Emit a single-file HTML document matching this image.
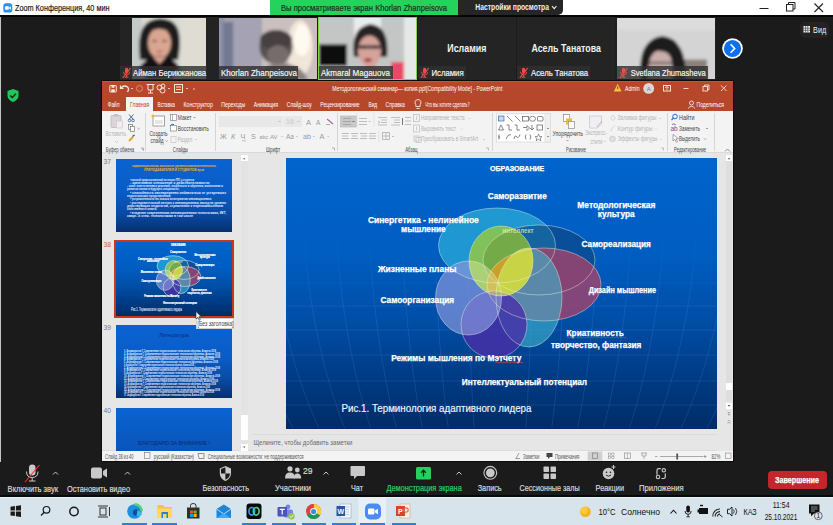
<!DOCTYPE html>
<html><head><meta charset="utf-8">
<style>
*{margin:0;padding:0;box-sizing:border-box}
html,body{width:833px;height:525px;overflow:hidden;background:#1b1b1b;font-family:"Liberation Sans",sans-serif}
body{position:relative}
.a{position:absolute}
svg{position:absolute;overflow:visible}
</style></head><body>

<div class="a" style="left:0px;top:0px;width:833px;height:15px;background:#ffffff;"></div>
<div class="a" style="left:0px;top:15px;width:833px;height:2px;background:#050505;"></div>
<svg style="left:2.5px;top:2.5px" width="10" height="10" viewBox="0 0 10 10">
<rect x="0.3" y="0.3" width="9" height="9.2" rx="2.6" fill="#2d8cff"/>
<rect x="2" y="3.3" width="3.8" height="3.4" rx="0.7" fill="#fff"/>
<path d="M6.2 4.3 L7.9 3.3 V6.7 L6.2 5.7 Z" fill="#fff"/></svg>
<svg style="left:750px;top:0" width="83" height="16" viewBox="750 0 83 16">
<path d="M759.5 8.5 H768.5" stroke="#222" stroke-width="1"/>
<rect x="786.5" y="4.5" width="6.5" height="6.5" fill="none" stroke="#222" stroke-width="1"/>
<path d="M788.5 4.5 V2.5 H795 V9 H793" fill="none" stroke="#222" stroke-width="1"/>
<path d="M814.5 3.5 L823 12 M823 3.5 L814.5 12" stroke="#222" stroke-width="1.1"/>
</svg>
<div class="a" style="left:270px;top:0px;width:188px;height:15px;background:#24d35c;"></div>
<div class="a" style="left:458px;top:0px;width:105px;height:15px;background:#262626;border-radius:0 0 5px 0"></div>
<svg style="left:550px;top:4px" width="8" height="7" viewBox="0 0 8 7"><path d="M2 2.2 L4.2 4.6 L6.4 2.2" fill="none" stroke="#eee" stroke-width="1.1"/></svg>
<div class="a" style="left:120px;top:17px;width:99px;height:63px;background:#232323;"></div>
<div class="a" style="left:417px;top:17px;width:99px;height:63px;background:#242424;"></div>
<div class="a" style="left:516px;top:17px;width:99px;height:63px;background:#242424;"></div>
<div class="a" style="left:615px;top:17px;width:101px;height:63px;background:#202020;"></div>
<div class="a" style="left:516px;top:17px;width:1px;height:63px;background:#1b1b1b;"></div>
<div class="a" style="left:417px;top:17px;width:1px;height:63px;background:#1b1b1b;"></div>
<svg style="left:132px;top:18px" width="74" height="61" viewBox="132 18 74 61"><defs><filter id="bl132" x="-20%" y="-20%" width="140%" height="140%"><feGaussianBlur stdDeviation="1.6"/></filter><clipPath id="cp132"><rect x="132" y="18" width="74" height="61"/></clipPath></defs><g clip-path="url(#cp132)"><g filter="url(#bl132)">
<rect x="120" y="10" width="100" height="80" fill="#d6d8d2"/>
<rect x="120" y="10" width="22" height="80" fill="#c4cac8"/>
<rect x="180" y="10" width="40" height="80" fill="#dedcd3"/>
<path d="M140 60 Q136 28 150 21 Q160 16 171 21 Q184 28 178 60 Z" fill="#1f1a1d"/>
<ellipse cx="159.5" cy="43" rx="11.5" ry="15.5" fill="#d9a690"/>
<path d="M147 35 Q150 24 162 24 Q173 25 173 36 Q167 28 158 29 Q150 30 147 35 Z" fill="#231d20"/>
<ellipse cx="154.5" cy="41" rx="2.2" ry="1" fill="#5a3a34"/><ellipse cx="164.5" cy="41" rx="2.2" ry="1" fill="#5a3a34"/>
<ellipse cx="159.5" cy="51.5" rx="3" ry="1.2" fill="#c07070"/>
<path d="M137 79 Q138 58 159.5 56 Q181 58 182 79 Z" fill="#141114"/>
<path d="M153 57 L159.5 64 L166 57 Z" fill="#d9a690"/>
<path d="M132 79 L142 70 L147 79 Z M187 79 L177 70 L172 79 Z" fill="#eeeae6"/>
</g></g></svg>
<svg style="left:219px;top:18px" width="98" height="61" viewBox="219 18 98 61"><defs><filter id="bl219" x="-20%" y="-20%" width="140%" height="140%"><feGaussianBlur stdDeviation="1.6"/></filter><clipPath id="cp219"><rect x="219" y="18" width="98" height="61"/></clipPath></defs><g clip-path="url(#cp219)"><g filter="url(#bl219)">
<rect x="210" y="10" width="120" height="80" fill="#a3a1b1"/>
<rect x="219" y="10" width="5" height="80" fill="#8d90a8"/>
<rect x="223" y="22" width="10" height="48" fill="#737893"/>
<rect x="235" y="10" width="25" height="80" fill="#a5a3b3"/>
<rect x="262" y="10" width="60" height="80" fill="#c9c0bf"/>
<ellipse cx="300" cy="48" rx="13" ry="28" fill="#f1e6d8"/>
<ellipse cx="302" cy="40" rx="8" ry="16" fill="#fffaf0"/>
<ellipse cx="276" cy="47" rx="16.5" ry="17" fill="#575050"/>
<ellipse cx="276" cy="40" rx="16" ry="10" fill="#464041"/>
<ellipse cx="278" cy="55" rx="11" ry="10" fill="#776c6c"/>
<path d="M258 80 Q262 64 280 63 Q302 64 308 80 Z" fill="#8a8282"/>
</g></g></svg>
<div class="a" style="left:318px;top:17px;width:99px;height:63px;background:#86d24e;"></div>
<svg style="left:319px;top:18px" width="97" height="61" viewBox="319 18 97 61"><defs><filter id="bl319" x="-20%" y="-20%" width="140%" height="140%"><feGaussianBlur stdDeviation="1.6"/></filter><clipPath id="cp319"><rect x="319" y="18" width="97" height="61"/></clipPath></defs><g clip-path="url(#cp319)"><g filter="url(#bl319)">
<rect x="310" y="10" width="120" height="80" fill="#c3c6c4"/>
<rect x="354" y="10" width="27" height="34" fill="#ebebeb"/>
<rect x="404" y="10" width="16" height="80" fill="#e6e7e7"/>
<rect x="319" y="44.3" width="28" height="21.7" fill="#0c0c0e"/>
<path d="M354 57 Q350 28 370 24 Q390 26 387 57 Z" fill="#262124"/>
<ellipse cx="369.5" cy="51" rx="11.5" ry="15.5" fill="#d4a39a"/>
<path d="M357 38 Q362 30 372 31 Q382 32 383 40 Q376 34 368 35 Q361 36 357 38 Z" fill="#2a2426"/>
<rect x="357" y="45" width="25" height="4" fill="#4a3f40" opacity="0.85"/><ellipse cx="363" cy="47" rx="2" ry="1" fill="#3a2a2a"/><ellipse cx="375" cy="47" rx="2" ry="1" fill="#3a2a2a"/>
<ellipse cx="368" cy="60" rx="3.8" ry="1.8" fill="#a02535"/>
<rect x="391" y="62" width="13" height="20" fill="#e84a6a"/>
<path d="M350 80 Q356 67 370 66 Q386 67 392 80 Z" fill="#c09098"/>
</g></g></svg>
<svg style="left:617px;top:18px" width="98" height="61" viewBox="617 18 98 61"><defs><filter id="bl617" x="-20%" y="-20%" width="140%" height="140%"><feGaussianBlur stdDeviation="1.6"/></filter><clipPath id="cp617"><rect x="617" y="18" width="98" height="61"/></clipPath></defs><g clip-path="url(#cp617)"><g filter="url(#bl617)">
<rect x="600" y="10" width="130" height="80" fill="#d4d4d4"/>
<rect x="600" y="10" width="130" height="20" fill="#dcdcdc"/>
<rect x="683" y="59.5" width="24" height="25" fill="#8c827c"/>
<path d="M641 82 Q636 40 662 36 Q687 38 686 82 Z" fill="#1c1a1c"/>
<path d="M648 82 Q647 54 657 51 Q668 50 671 58 Q674 70 672 82 Z" fill="#c9aeac"/>
<rect x="649" y="61.5" width="23" height="3" fill="#5a4d50" opacity="0.6"/>
</g></g></svg>
<div class="a" style="left:120px;top:66px;width:87px;height:13px;background:rgba(48,48,48,0.82);"></div>
<svg style="left:121px;top:66px" width="11" height="13" viewBox="0 0 11 13"><rect x="4" y="1.8" width="3.2" height="5.6" rx="1.6" fill="#e8504a"/><path d="M2.6 5.8 Q2.6 9 5.6 9 Q8.6 9 8.6 5.8 M5.6 9 V11 M3.8 11.2 H7.4" fill="none" stroke="#e8504a" stroke-width="1"/><path d="M1.8 11.8 L9.6 2.2" stroke="#e8504a" stroke-width="1.1"/></svg>
<div class="a" style="left:219px;top:66px;width:79px;height:13px;background:rgba(48,48,48,0.82);"></div>
<div class="a" style="left:319px;top:66px;width:74px;height:13px;background:rgba(48,48,48,0.82);"></div>
<div class="a" style="left:418px;top:66px;width:48px;height:13px;background:rgba(48,48,48,0.82);"></div>
<svg style="left:419px;top:66px" width="11" height="13" viewBox="0 0 11 13"><rect x="4" y="1.8" width="3.2" height="5.6" rx="1.6" fill="#e8504a"/><path d="M2.6 5.8 Q2.6 9 5.6 9 Q8.6 9 8.6 5.8 M5.6 9 V11 M3.8 11.2 H7.4" fill="none" stroke="#e8504a" stroke-width="1"/><path d="M1.8 11.8 L9.6 2.2" stroke="#e8504a" stroke-width="1.1"/></svg>
<div class="a" style="left:517px;top:66px;width:73px;height:13px;background:rgba(48,48,48,0.82);"></div>
<svg style="left:518px;top:66px" width="11" height="13" viewBox="0 0 11 13"><rect x="4" y="1.8" width="3.2" height="5.6" rx="1.6" fill="#e8504a"/><path d="M2.6 5.8 Q2.6 9 5.6 9 Q8.6 9 8.6 5.8 M5.6 9 V11 M3.8 11.2 H7.4" fill="none" stroke="#e8504a" stroke-width="1"/><path d="M1.8 11.8 L9.6 2.2" stroke="#e8504a" stroke-width="1.1"/></svg>
<div class="a" style="left:617px;top:66px;width:91px;height:13px;background:rgba(48,48,48,0.82);"></div>
<svg style="left:618px;top:66px" width="11" height="13" viewBox="0 0 11 13"><rect x="4" y="1.8" width="3.2" height="5.6" rx="1.6" fill="#e8504a"/><path d="M2.6 5.8 Q2.6 9 5.6 9 Q8.6 9 8.6 5.8 M5.6 9 V11 M3.8 11.2 H7.4" fill="none" stroke="#e8504a" stroke-width="1"/><path d="M1.8 11.8 L9.6 2.2" stroke="#e8504a" stroke-width="1.1"/></svg>
<svg style="left:720px;top:36px" width="26" height="26" viewBox="720 36 26 26">
<circle cx="732.5" cy="48.5" r="10.3" fill="#ffffff"/>
<circle cx="732.5" cy="48.5" r="8.6" fill="#0e71eb"/>
<path d="M730.6 44.3 L734.6 48.5 L730.6 52.7" fill="none" stroke="#fff" stroke-width="1.6"/>
</svg>
<div class="a" style="left:800px;top:22px;width:29px;height:16px;background:#232323;border-radius:5px"></div>
<svg style="left:803px;top:25px" width="8" height="8" viewBox="0 0 8 8"><rect x="0.5" y="1" width="6.5" height="6.5" fill="#eee"/><path d="M0.5 3.2 H7 M0.5 5.3 H7 M2.6 1 V7.5 M4.8 1 V7.5" stroke="#333" stroke-width="0.6"/></svg>
<svg style="left:6px;top:88px" width="14" height="15" viewBox="0 0 14 15">
<path d="M7 1 L12.5 3 V7.5 C12.5 10.8 10 13 7 14 C4 13 1.5 10.8 1.5 7.5 V3 Z" fill="#23c45b"/>
<path d="M4.3 7.6 L6.3 9.6 L9.9 5.6" fill="none" stroke="#1b1b1b" stroke-width="1.4"/>
</svg>
<div class="a" style="left:0px;top:17px;width:1px;height:481px;background:#c4c4c4;"></div>
<div class="a" style="left:101px;top:80px;width:633px;height:382px;background:#0b0b0b;"></div>
<div class="a" style="left:102px;top:81px;width:631px;height:30px;background:#b7472a;"></div>
<div class="a" style="left:102px;top:81px;width:631px;height:1px;background:#cd5535;"></div>
<div class="a" style="left:102px;top:111px;width:631px;height:42px;background:#f3f3f3;"></div>
<div class="a" style="left:126px;top:97px;width:27px;height:14px;background:#f3f3f3;"></div>
<div class="a" style="left:102px;top:152px;width:631px;height:1px;background:#dadada;"></div>
<div class="a" style="left:102px;top:153px;width:631px;height:298px;background:#e6e6e6;"></div>
<div class="a" style="left:102px;top:451px;width:631px;height:10px;background:#f3f3f3;"></div>
<div class="a" style="left:102px;top:450px;width:631px;height:1px;background:#dcdcdc;"></div>
<div class="a" style="left:145.4px;top:113px;width:1px;height:38px;background:#d6d6d6;"></div>
<div class="a" style="left:215.3px;top:113px;width:1px;height:38px;background:#d6d6d6;"></div>
<div class="a" style="left:337px;top:113px;width:1px;height:38px;background:#d6d6d6;"></div>
<div class="a" style="left:492px;top:113px;width:1px;height:38px;background:#d6d6d6;"></div>
<div class="a" style="left:667px;top:113px;width:1px;height:38px;background:#d6d6d6;"></div>
<div class="a" style="left:714px;top:113px;width:1px;height:38px;background:#d6d6d6;"></div>
<svg style="left:102px;top:81px" width="631" height="30" viewBox="102 81 631 30" fill="none" stroke="#fbe3dc" stroke-width="1">
<rect x="109.8" y="85.5" width="6.5" height="6.5" rx="0.5" fill="none"/><rect x="111.5" y="85.5" width="3" height="2.2" fill="#fbe3dc" stroke="none"/><rect x="111.3" y="89.3" width="3.5" height="2.7" fill="#fbe3dc" stroke="none"/>
<path d="M121 88 Q124 84.5 127.5 87 Q129.5 89 127.5 92" stroke-width="1.3"/><path d="M120.5 85.5 V88.5 H123.5" stroke-width="1.2"/>
<path d="M131 88.5 H133" stroke-width="0.8"/>
<circle cx="139.5" cy="88.5" r="3" stroke="#d88f7d"/>
<path d="M146.5 84.5 H154.5 M148 85 V90 H153 V85 M150.5 90 V93 M148 93 H153" stroke-width="1"/>
<circle cx="159.5" cy="87.5" r="2.5"/><circle cx="162.5" cy="90.5" r="2.5"/><circle cx="163" cy="86" r="2"/>
<path d="M168 88.5 H170" stroke-width="0.8"/>
<rect x="174.5" y="84.5" width="8" height="8"/><path d="M176 87 H181 M176 89.5 H181"/>
<path d="M186 88.5 H188" stroke-width="0.8"/><path d="M193 89 H195" stroke-width="0.8"/>
</svg>
<svg style="left:610px;top:81px" width="123" height="30" viewBox="610 81 123 30">
<path d="M617.7 83.8 L621.6 91.6 H613.8 Z" fill="#f5c342"/><path d="M617.7 86.3 V89.2" stroke="#6b4b00" stroke-width="0.9"/>
<circle cx="648.7" cy="88.4" r="5.4" fill="#d9d9d9"/><text x="648.7" y="90.6" font-size="6" fill="#777" text-anchor="middle" font-family="Liberation Sans">A</text>
<rect x="663.5" y="85.5" width="7" height="5.5" fill="none" stroke="#fbe3dc"/><path d="M667 87 V90 M665 88 L667 86.5 L669 88" stroke="#fbe3dc" stroke-width="0.8" fill="none"/>
<path d="M683.5 88.5 H688.5" stroke="#fbe3dc" stroke-width="0.9"/>
<rect x="703" y="86.5" width="4.5" height="4.5" fill="none" stroke="#fbe3dc" stroke-width="0.9"/><path d="M704.5 86.5 V85 H709 V89.5 H707.5" fill="none" stroke="#fbe3dc" stroke-width="0.9"/>
<path d="M721 85.5 L726.5 91 M726.5 85.5 L721 91" stroke="#fbe3dc" stroke-width="0.9"/>
<circle cx="691.5" cy="103" r="2" fill="none" stroke="#fbe3dc" stroke-width="0.9"/><path d="M688 108.5 Q691.5 104 695 108.5" fill="none" stroke="#fbe3dc" stroke-width="0.9"/>
</svg>
<svg style="left:412px;top:97px" width="12" height="14" viewBox="412 97 12 14"><path d="M418 99.5 a3 3 0 0 1 2.2 5 v2 h-4.4 v-2 a3 3 0 0 1 2.2 -5z M416.5 108.5 h3" fill="none" stroke="#fde9e3" stroke-width="0.9"/></svg>
<svg style="left:102px;top:111px" width="631" height="42" viewBox="102 111 631 42">
<!-- paste -->
<rect x="111" y="115.5" width="10" height="12" rx="1" fill="#dcd4d8" stroke="#c9bfc5"/><rect x="114" y="114" width="4" height="2.5" fill="#c9bfc5"/><rect x="116.5" y="121" width="6" height="7" fill="#f2eef0" stroke="#d0c6cc" stroke-width="0.7"/>
<path d="M115 141 L116.5 142.5 L118 141" fill="none" stroke="#bbb" stroke-width="0.7"/>
<!-- scissors -->
<path d="M129 114.5 L133.5 119.5 M133.5 114.5 L129 119.5" stroke="#555" stroke-width="0.9"/><circle cx="129.5" cy="120.5" r="1.3" fill="none" stroke="#3a77c0" stroke-width="0.9"/><circle cx="133" cy="120.5" r="1.3" fill="none" stroke="#3a77c0" stroke-width="0.9"/>
<!-- copy -->
<rect x="128.5" y="124.5" width="4" height="5" fill="#fff" stroke="#777" stroke-width="0.7"/><rect x="130.5" y="126.5" width="4" height="5" fill="#fff" stroke="#777" stroke-width="0.7"/><path d="M137.5 128 L138.6 129 L139.7 128" fill="none" stroke="#666" stroke-width="0.6"/>
<!-- painter -->
<path d="M129 141 L133 137" stroke="#e0a62c" stroke-width="2"/><path d="M132.5 136.5 L134.5 135" stroke="#555" stroke-width="1.4"/>
<path d="M141 148 H143.5 V150.5" fill="none" stroke="#888" stroke-width="0.6"/><path d="M141.5 148.5 L143.5 150.5" stroke="#888" stroke-width="0.6"/>
<!-- new slide -->
<rect x="153" y="116" width="11.5" height="10" fill="#fff" stroke="#8a8a8a" stroke-width="0.8"/><path d="M155 121 H162.5 M155 123 H162.5" stroke="#aaa" stroke-width="0.6"/><circle cx="153" cy="116" r="1.5" fill="#f4b43c"/>
<path d="M165.5 140.5 L166.5 141.5 L167.5 140.5" fill="none" stroke="#666" stroke-width="0.6"/>
<!-- layout/reset/section -->
<rect x="170.5" y="114.5" width="6" height="6" fill="#fff" stroke="#888" stroke-width="0.7"/><path d="M172.5 114.5 V120.5" stroke="#888" stroke-width="0.6"/><path d="M193.5 117 L194.5 118 L195.5 117" fill="none" stroke="#666" stroke-width="0.6"/>
<rect x="170.5" y="125.5" width="6" height="5.5" fill="#fff" stroke="#888" stroke-width="0.7"/><path d="M170 126 Q171.5 123.5 174 124.5" fill="none" stroke="#2c6fc0" stroke-width="1"/>
<rect x="171" y="136.5" width="5" height="6" fill="none" stroke="#c5c5c5" stroke-width="0.7"/><path d="M195 139 L196 140 L197 139" fill="none" stroke="#bbb" stroke-width="0.6"/>
<!-- font boxes -->
<rect x="218.6" y="116" width="64.4" height="11" fill="#e8e8e8"/><rect x="283" y="116" width="19" height="11" fill="#e8e8e8"/><path d="M283 116 V127" stroke="#f3f3f3"/>
<path d="M278.5 121 L279.5 122 L280.5 121" fill="none" stroke="#aaa" stroke-width="0.6"/><path d="M297.5 121 L298.5 122 L299.5 121" fill="none" stroke="#aaa" stroke-width="0.6"/>
<text x="286" y="124" font-size="7" fill="#c8c8c8" font-family="Liberation Sans">16</text>
<text x="306" y="124.5" font-size="7.5" fill="#999" font-family="Liberation Sans">A</text><text x="316" y="124.5" font-size="6.5" fill="#999" font-family="Liberation Sans">A</text>
<path d="M327 119 L333 124" stroke="#a56ca5" stroke-width="1.2"/><path d="M326 124.5 H330" stroke="#999" stroke-width="0.8"/>
<g font-family="Liberation Sans" font-size="7.2" fill="#9a9a9a">
<text x="220" y="139.3">Ж</text><text x="231" y="139.3" font-style="italic">К</text><text x="240.5" y="139.3">Ч</text><text x="251" y="139.3">S</text><text x="259.5" y="139.3" font-size="5.5">abc</text><text x="270" y="139.3" font-size="6">AV</text><text x="286" y="139.3" font-size="6.5">Aa</text>
<text x="303" y="139.3">ab</text><text x="319.5" y="139.3">A</text></g>
<path d="M242 140.8 H246" stroke="#999" stroke-width="0.6"/>
<path d="M281.5 136 L282.3 137 L283.1 136 M296 136 L296.8 137 L297.6 136 M313 136 L313.8 137 L314.6 136 M327.5 136 L328.3 137 L329.1 136" fill="none" stroke="#aaa" stroke-width="0.6"/>
<path d="M332 148 H334.5 V150.5" fill="none" stroke="#888" stroke-width="0.6"/>
<!-- paragraph -->
<rect x="340.5" y="116" width="16" height="11" fill="#c9c9c9" stroke="#b5b5b5" stroke-width="0.6"/><path d="M352.5 121 L353.5 122 L354.5 121" fill="none" stroke="#444" stroke-width="0.7"/>
<g stroke="#b0b0b0" stroke-width="0.8">
<path d="M343 118.5 H351 M343 121.5 H351 M343 124.5 H351" stroke="#9d9d9d"/>
<path d="M359 118.5 H367 M359 121.5 H367 M359 124.5 H367"/><path d="M368.5 121 L369.5 122 L370.5 121" fill="none"/>
<path d="M378 117.5 H387 M381 120 H387 M381 122.5 H387 M378 125 H387"/><path d="M378 121 L380 122.3 L378 123.5" fill="none"/>
<path d="M391 117.5 H400 M394 120 H400 M394 122.5 H400 M391 125 H400"/>
<path d="M405 117.5 H411 M405 121 H411 M405 124.5 H411"/><path d="M402.5 118 V125" stroke="#555"/><path d="M413.5 121 L414.5 122 L415.5 121" fill="none"/>
<path d="M342 133.5 H349 M342 136 H348 M342 138.5 H349 M351 133.5 H358 M352 136 H357 M351 138.5 H358 M360 133.5 H367 M361 136 H367 M360 138.5 H367 M369 133.5 H376 M369 136 H376 M369 138.5 H376"/>
<rect x="382.5" y="132.5" width="7" height="7" fill="none"/><path d="M382.5 136 H389.5 M386 132.5 V139.5"/><path d="M392 136 L393 137 L394 136" fill="none"/>
<path d="M379 131 V142 M357 113 V127 M374 113 V127" stroke="#dedede"/>
</g>
<g stroke="#c2c2c2" stroke-width="0.8" fill="none">
<rect x="413.5" y="114.5" width="6" height="7"/><path d="M416.5 116 V120"/>
<rect x="413.5" y="125" width="6" height="7"/><path d="M416.5 126.5 V130.5"/>
<rect x="414" y="136" width="5" height="5"/><rect x="416" y="137.5" width="5" height="5"/>
<path d="M468.5 118 L469.5 119 L470.5 118 M461 128.6 L462 129.6 L463 128.6 M483 139 L484 140 L485 139" stroke-width="0.6"/>
</g>
<path d="M486 148 H488.5 V150.5" fill="none" stroke="#999" stroke-width="0.6"/>
<!-- shapes gallery -->
<rect x="496.6" y="113.8" width="54" height="28.2" fill="#ffffff" stroke="#d6d6d6" stroke-width="0.7"/>
<rect x="545" y="113.8" width="5.6" height="28.2" fill="#f0f0f0" stroke="#d6d6d6" stroke-width="0.6"/>
<path d="M547 128 L548 129 L549 128 M547 136 L548 137 L549 136" fill="none" stroke="#555" stroke-width="0.6"/>
<g stroke="#555" stroke-width="0.7" fill="none">
<rect x="498.5" y="116" width="5.5" height="5" fill="#c8d9ee" stroke="#3a6ab0"/>
<path d="M507 116 L512.5 121.5 M515 116 L520.5 121.5"/>
<rect x="522.5" y="116.5" width="6" height="4.5"/><ellipse cx="532.5" cy="118.8" rx="3" ry="2.5"/><rect x="537.5" y="116.5" width="5.5" height="4.5" rx="1"/>
<path d="M498.5 130 L501 125 L503.5 130 Z M506.5 125 H509 V130 H512 M514.5 125 H517 V130 H520"/>
<path d="M523 127.5 H527 V125.5 L529.5 128 L527 130.5 V128.5"/><path d="M532 125 V130 M530 128 L532 130 L534 128"/><rect x="537" y="125" width="5.5" height="5"/>
<path d="M499 134.5 V139.5 M498 137 H500 M506 139 Q507.5 134 511 134.5 M514 139 Q515 134 517 137 Q518.5 139 520 134.5 M526 134.5 Q524.5 137 526 139.5 M530 134.5 Q531.5 137 530 139.5"/>
<path d="M538.5 134 L539.5 136.5 L542 136.7 L540.2 138.2 L540.8 140.7 L538.5 139.4 L536.2 140.7 L536.8 138.2 L535 136.7 L537.5 136.5 Z" stroke-width="0.6"/>
</g>
<!-- arrange -->
<rect x="563.5" y="114.5" width="6" height="7" fill="#fff" stroke="#8a8a8a" stroke-width="0.7"/><rect x="566" y="118.5" width="6" height="6" fill="#f3b73d"/><rect x="568.5" y="121.5" width="6" height="7" fill="#fff" stroke="#8a8a8a" stroke-width="0.7"/>
<path d="M566.5 140 L567.5 141 L568.5 140" fill="none" stroke="#666" stroke-width="0.6"/>
<!-- express styles -->
<path d="M589.5 116 H601.5 V124 L597.5 128 H589.5 Z" fill="#f1eef3" stroke="#cdc7d0" stroke-width="0.8"/><path d="M597 127 L602 121" stroke="#b9b2bb" stroke-width="1"/>
<path d="M604 141 L605 142 L606 141" fill="none" stroke="#bbb" stroke-width="0.6"/>
<!-- fill/outline/effects -->
<g stroke="#c5c5c5" stroke-width="0.8" fill="none">
<path d="M610.5 118 L613 115.5 L615.5 118 L613 120.5 Z"/><path d="M611 129.5 L615 125.5 M610.5 130.5 H612"/><circle cx="612.5" cy="139" r="2.8" fill="#e2e2e2"/>
<path d="M659 118 L660 119 L661 118 M655 128.6 L656 129.6 L657 128.6 M660 139 L661 140 L662 139" stroke-width="0.6"/>
</g>
<path d="M661 148 H663.5 V150.5" fill="none" stroke="#999" stroke-width="0.6"/>
<!-- editing -->
<circle cx="675" cy="116.5" r="2.3" fill="none" stroke="#2a6dbf" stroke-width="1"/><path d="M673.5 118 L671.5 120" stroke="#2a6dbf" stroke-width="1.1"/>
<text x="670.5" y="130.5" font-size="6.5" fill="#5a5aa0" font-family="Liberation Sans">ab</text><path d="M672 124.5 Q674 123 676 125" fill="none" stroke="#7b4fa3" stroke-width="0.8"/>
<path d="M673 134.5 V141 L674.8 139.3 L676.5 142.3 L677.5 141.8 L676 138.8 H678.5 Z" fill="#fff" stroke="#777" stroke-width="0.6"/>
<path d="M706 128 L707 129 L708 128 M704 138.5 L705 139.5 L706 138.5" fill="none" stroke="#666" stroke-width="0.6"/>
<path d="M725 151.5 L727.5 149 L730 151.5" fill="none" stroke="#777" stroke-width="0.8"/>
</svg>
<div class="a" style="left:241px;top:155px;width:6.5px;height:296px;background:#e3e3e3;"></div>
<div class="a" style="left:241px;top:155px;width:6.5px;height:6px;background:#ffffff;"></div>
<div class="a" style="left:241px;top:415px;width:6.5px;height:25px;background:#fdfdfd;"></div>
<div class="a" style="left:241px;top:444px;width:6.5px;height:6.5px;background:#ffffff;"></div>
<svg style="left:241px;top:155px" width="7" height="296" viewBox="241 155 7 296"><path d="M243 159.3 L244.25 157.8 L245.5 159.3 Z M243 446.5 L244.25 448 L245.5 446.5 Z" fill="#555"/></svg>
<div class="a" style="left:717px;top:153px;width:16px;height:298px;background:#e6e6e6;"></div>
<div class="a" style="left:726px;top:155px;width:6px;height:246px;background:#dedede;"></div>
<div class="a" style="left:726px;top:155px;width:6px;height:6px;background:#ffffff;"></div>
<div class="a" style="left:726px;top:382.7px;width:6px;height:7.3px;background:#fdfdfd;"></div>
<div class="a" style="left:726px;top:403px;width:6px;height:6px;background:#ffffff;"></div>
<svg style="left:725px;top:155px" width="8" height="280" viewBox="725 155 8 280"><path d="M727.5 159.3 L729 157.8 L730.5 159.3 Z M727.5 405 L729 406.5 L730.5 405 Z" fill="#555"/><path d="M727.8 412 L729 413.2 L730.2 412 M727.8 414 L729 415.2 L730.2 414 M727.8 421.5 L729 420.3 L730.2 421.5 M727.8 423.5 L729 422.3 L730.2 423.5" fill="none" stroke="#666" stroke-width="0.6"/></svg>
<div class="a" style="left:252px;top:433.5px;width:465px;height:1px;background:#dbdbdb;"></div>
<svg style="left:102px;top:451px" width="631" height="10" viewBox="102 451 631 10">
<rect x="144.5" y="452.5" width="5.5" height="6" fill="none" stroke="#777" stroke-width="0.6"/>
<path d="M198 453.5 H204 V458.5 H199 Z" fill="none" stroke="#666" stroke-width="0.7"/>
<path d="M516 458.5 L519 453 M515.5 458.5 H520" stroke="#666" stroke-width="0.6"/>
<rect x="546.5" y="453" width="6" height="4" fill="#444"/><path d="M548 457 V459 L550 457" fill="#444"/>
<rect x="587.7" y="451.5" width="14.6" height="9" fill="#cfcfcf"/>
<rect x="592.5" y="453" width="5" height="5.5" fill="none" stroke="#777" stroke-width="0.6"/>
<rect x="608.5" y="453" width="2.2" height="2.2" fill="none" stroke="#888" stroke-width="0.5"/><rect x="611.8" y="453" width="2.2" height="2.2" fill="none" stroke="#888" stroke-width="0.5"/><rect x="608.5" y="456.3" width="2.2" height="2.2" fill="none" stroke="#888" stroke-width="0.5"/><rect x="611.8" y="456.3" width="2.2" height="2.2" fill="none" stroke="#888" stroke-width="0.5"/>
<rect x="624.5" y="453" width="6" height="5.5" fill="none" stroke="#888" stroke-width="0.6"/><path d="M627.5 453 V458.5" stroke="#888" stroke-width="0.5"/>
<path d="M641 453 H647 M642 453 V456 H646 V453 M644 456 V459" fill="none" stroke="#888" stroke-width="0.6"/>
<path d="M655 456.5 H657.5 M660 456.5 H703 M703.5 456.5 H706.5 M705 455 V458" stroke="#777" stroke-width="0.6"/>
<rect x="676.3" y="453.5" width="1.8" height="6" fill="#555"/>
<rect x="725.5" y="453" width="5.5" height="5.5" fill="none" stroke="#888" stroke-width="0.6"/>
</svg>
<svg style="left:286px;top:158px" width="431" height="271" viewBox="0 0 431 271"><defs><linearGradient id="sbg" x1="0" y1="0" x2="0" y2="1"><stop offset="0" stop-color="#0064cc"/><stop offset="0.35" stop-color="#005dc2"/><stop offset="0.6" stop-color="#004ea6"/><stop offset="0.8" stop-color="#003c86"/><stop offset="1" stop-color="#002c66"/></linearGradient></defs><rect x="0" y="0" width="431" height="271" fill="url(#sbg)"/><g mask="url(#mm)"><path d="M0 50 L431 50 M0 74 L431 74 M0 100 L431 100 M0 125 L431 125 M0 148 L431 148 M0 172 L431 172 M0 197 L431 197 M0 223 L431 223 M0 247 L431 247" fill="none" stroke="#5c9cff" stroke-opacity="0.2" stroke-width="0.8"/></g><defs><linearGradient id="mg" x1="0" y1="0" x2="0" y2="1"><stop offset="0" stop-color="#fff" stop-opacity="0"/><stop offset="0.3" stop-color="#fff" stop-opacity="0.15"/><stop offset="0.55" stop-color="#fff" stop-opacity="1"/><stop offset="1" stop-color="#fff" stop-opacity="1"/></linearGradient><mask id="mm" maskUnits="userSpaceOnUse" x="0" y="0" width="431" height="271"><rect x="0" y="0" width="431" height="271" fill="url(#mg)"/></mask></defs><g mask="url(#mm)"><g transform="translate(-286 -158)"><path d="M203.4 158 L203.2 164 L203.1 170 L203.0 176 L203.0 182 L203.1 188 L203.2 194 L203.4 200 L203.6 206 L204.0 212 L204.3 218 L204.8 224 L205.3 230 L205.9 236 L206.6 242 L207.3 248 L208.1 254 L209.0 260 L209.9 266 L211.0 272 L212.1 278 L213.2 284 L214.5 290 L215.8 296 L217.2 302 L218.6 308 L220.2 314 L221.8 320 L223.5 326 L225.3 332 L227.2 338 L229.1 344 L231.2 350 L233.3 356 L235.5 362 L237.8 368 L240.3 374 L242.8 380 L245.4 386 L248.1 392 L251.0 398 L253.9 404 L257.0 410 L260.2 416 L263.5 422 L267.0 428 M236.4 158 L236.2 164 L236.1 170 L236.0 176 L236.0 182 L236.1 188 L236.2 194 L236.3 200 L236.6 206 L236.8 212 L237.2 218 L237.6 224 L238.1 230 L238.6 236 L239.2 242 L239.8 248 L240.6 254 L241.3 260 L242.2 266 L243.1 272 L244.0 278 L245.1 284 L246.2 290 L247.3 296 L248.6 302 L249.9 308 L251.3 314 L252.7 320 L254.2 326 L255.8 332 L257.5 338 L259.2 344 L261.0 350 L262.9 356 L264.9 362 L267.0 368 L269.1 374 L271.4 380 L273.7 386 L276.1 392 L278.7 398 L281.3 404 L284.0 410 L286.8 416 L289.8 422 L292.9 428 M269.3 158 L269.2 164 L269.1 170 L269.0 176 L269.0 182 L269.0 188 L269.1 194 L269.3 200 L269.5 206 L269.7 212 L270.0 218 L270.4 224 L270.8 230 L271.3 236 L271.8 242 L272.4 248 L273.0 254 L273.7 260 L274.4 266 L275.2 272 L276.0 278 L276.9 284 L277.9 290 L278.9 296 L280.0 302 L281.1 308 L282.3 314 L283.6 320 L284.9 326 L286.3 332 L287.8 338 L289.3 344 L290.9 350 L292.6 356 L294.3 362 L296.1 368 L298.0 374 L299.9 380 L302.0 386 L304.1 392 L306.3 398 L308.6 404 L311.0 410 L313.5 416 L316.1 422 L318.8 428 M302.3 158 L302.2 164 L302.1 170 L302.0 176 L302.0 182 L302.0 188 L302.1 194 L302.2 200 L302.4 206 L302.6 212 L302.9 218 L303.2 224 L303.6 230 L304.0 236 L304.4 242 L304.9 248 L305.4 254 L306.0 260 L306.6 266 L307.3 272 L308.0 278 L308.8 284 L309.6 290 L310.5 296 L311.4 302 L312.4 308 L313.4 314 L314.5 320 L315.7 326 L316.9 332 L318.1 338 L319.4 344 L320.8 350 L322.2 356 L323.7 362 L325.2 368 L326.8 374 L328.5 380 L330.3 386 L332.1 392 L334.0 398 L336.0 404 L338.0 410 L340.1 416 L342.3 422 L344.6 428 M335.2 158 L335.1 164 L335.1 170 L335.0 176 L335.0 182 L335.0 188 L335.1 194 L335.2 200 L335.3 206 L335.5 212 L335.7 218 L336.0 224 L336.3 230 L336.6 236 L337.0 242 L337.4 248 L337.8 254 L338.3 260 L338.9 266 L339.4 272 L340.0 278 L340.7 284 L341.4 290 L342.1 296 L342.9 302 L343.7 308 L344.5 314 L345.4 320 L346.4 326 L347.4 332 L348.4 338 L349.5 344 L350.6 350 L351.8 356 L353.1 362 L354.4 368 L355.7 374 L357.1 380 L358.6 386 L360.1 392 L361.7 398 L363.3 404 L365.0 410 L366.8 416 L368.6 422 L370.5 428 M368.2 158 L368.1 164 L368.0 170 L368.0 176 L368.0 182 L368.0 188 L368.1 194 L368.2 200 L368.3 206 L368.4 212 L368.6 218 L368.8 224 L369.0 230 L369.3 236 L369.6 242 L369.9 248 L370.3 254 L370.7 260 L371.1 266 L371.5 272 L372.0 278 L372.5 284 L373.1 290 L373.7 296 L374.3 302 L374.9 308 L375.6 314 L376.3 320 L377.1 326 L377.9 332 L378.7 338 L379.6 344 L380.5 350 L381.5 356 L382.5 362 L383.5 368 L384.6 374 L385.7 380 L386.9 386 L388.1 392 L389.3 398 L390.6 404 L392.0 410 L393.4 416 L394.9 422 L396.4 428 M401.1 158 L401.1 164 L401.0 170 L401.0 176 L401.0 182 L401.0 188 L401.1 194 L401.1 200 L401.2 206 L401.3 212 L401.4 218 L401.6 224 L401.8 230 L402.0 236 L402.2 242 L402.4 248 L402.7 254 L403.0 260 L403.3 266 L403.7 272 L404.0 278 L404.4 284 L404.8 290 L405.3 296 L405.7 302 L406.2 308 L406.7 314 L407.3 320 L407.8 326 L408.4 332 L409.1 338 L409.7 344 L410.4 350 L411.1 356 L411.8 362 L412.6 368 L413.4 374 L414.3 380 L415.1 386 L416.0 392 L417.0 398 L418.0 404 L419.0 410 L420.1 416 L421.2 422 L422.3 428 M434.1 158 L434.1 164 L434.0 170 L434.0 176 L434.0 182 L434.0 188 L434.0 194 L434.1 200 L434.1 206 L434.2 212 L434.3 218 L434.4 224 L434.5 230 L434.7 236 L434.8 242 L435.0 248 L435.1 254 L435.3 260 L435.5 266 L435.8 272 L436.0 278 L436.3 284 L436.5 290 L436.8 296 L437.1 302 L437.5 308 L437.8 314 L438.2 320 L438.6 326 L439.0 332 L439.4 338 L439.8 344 L440.3 350 L440.7 356 L441.2 362 L441.7 368 L442.3 374 L442.8 380 L443.4 386 L444.0 392 L444.7 398 L445.3 404 L446.0 410 L446.7 416 L447.4 422 L448.2 428 M467.0 158 L467.0 164 L467.0 170 L467.0 176 L467.0 182 L467.0 188 L467.0 194 L467.0 200 L467.1 206 L467.1 212 L467.1 218 L467.2 224 L467.3 230 L467.3 236 L467.4 242 L467.5 248 L467.6 254 L467.7 260 L467.8 266 L467.9 272 L468.0 278 L468.1 284 L468.3 290 L468.4 296 L468.6 302 L468.7 308 L468.9 314 L469.1 320 L469.3 326 L469.5 332 L469.7 338 L469.9 344 L470.1 350 L470.4 356 L470.6 362 L470.9 368 L471.1 374 L471.4 380 L471.7 386 L472.0 392 L472.3 398 L472.7 404 L473.0 410 L473.4 416 L473.7 422 L474.1 428 M533.0 158 L533.0 164 L533.0 170 L533.0 176 L533.0 182 L533.0 188 L533.0 194 L533.0 200 L532.9 206 L532.9 212 L532.9 218 L532.8 224 L532.7 230 L532.7 236 L532.6 242 L532.5 248 L532.4 254 L532.3 260 L532.2 266 L532.1 272 L532.0 278 L531.9 284 L531.7 290 L531.6 296 L531.4 302 L531.3 308 L531.1 314 L530.9 320 L530.7 326 L530.5 332 L530.3 338 L530.1 344 L529.9 350 L529.6 356 L529.4 362 L529.1 368 L528.9 374 L528.6 380 L528.3 386 L528.0 392 L527.7 398 L527.3 404 L527.0 410 L526.6 416 L526.3 422 L525.9 428 M565.9 158 L565.9 164 L566.0 170 L566.0 176 L566.0 182 L566.0 188 L566.0 194 L565.9 200 L565.9 206 L565.8 212 L565.7 218 L565.6 224 L565.5 230 L565.3 236 L565.2 242 L565.0 248 L564.9 254 L564.7 260 L564.5 266 L564.2 272 L564.0 278 L563.7 284 L563.5 290 L563.2 296 L562.9 302 L562.5 308 L562.2 314 L561.8 320 L561.4 326 L561.0 332 L560.6 338 L560.2 344 L559.7 350 L559.3 356 L558.8 362 L558.3 368 L557.7 374 L557.2 380 L556.6 386 L556.0 392 L555.3 398 L554.7 404 L554.0 410 L553.3 416 L552.6 422 L551.8 428 M598.9 158 L598.9 164 L599.0 170 L599.0 176 L599.0 182 L599.0 188 L598.9 194 L598.9 200 L598.8 206 L598.7 212 L598.6 218 L598.4 224 L598.2 230 L598.0 236 L597.8 242 L597.6 248 L597.3 254 L597.0 260 L596.7 266 L596.3 272 L596.0 278 L595.6 284 L595.2 290 L594.7 296 L594.3 302 L593.8 308 L593.3 314 L592.7 320 L592.2 326 L591.6 332 L590.9 338 L590.3 344 L589.6 350 L588.9 356 L588.2 362 L587.4 368 L586.6 374 L585.7 380 L584.9 386 L584.0 392 L583.0 398 L582.0 404 L581.0 410 L579.9 416 L578.8 422 L577.7 428 M631.8 158 L631.9 164 L632.0 170 L632.0 176 L632.0 182 L632.0 188 L631.9 194 L631.8 200 L631.7 206 L631.6 212 L631.4 218 L631.2 224 L631.0 230 L630.7 236 L630.4 242 L630.1 248 L629.7 254 L629.3 260 L628.9 266 L628.5 272 L628.0 278 L627.5 284 L626.9 290 L626.3 296 L625.7 302 L625.1 308 L624.4 314 L623.7 320 L622.9 326 L622.1 332 L621.3 338 L620.4 344 L619.5 350 L618.5 356 L617.5 362 L616.5 368 L615.4 374 L614.3 380 L613.1 386 L611.9 392 L610.7 398 L609.4 404 L608.0 410 L606.6 416 L605.1 422 L603.6 428 M664.8 158 L664.9 164 L664.9 170 L665.0 176 L665.0 182 L665.0 188 L664.9 194 L664.8 200 L664.7 206 L664.5 212 L664.3 218 L664.0 224 L663.7 230 L663.4 236 L663.0 242 L662.6 248 L662.2 254 L661.7 260 L661.1 266 L660.6 272 L660.0 278 L659.3 284 L658.6 290 L657.9 296 L657.1 302 L656.3 308 L655.5 314 L654.6 320 L653.6 326 L652.6 332 L651.6 338 L650.5 344 L649.4 350 L648.2 356 L646.9 362 L645.6 368 L644.3 374 L642.9 380 L641.4 386 L639.9 392 L638.3 398 L636.7 404 L635.0 410 L633.2 416 L631.4 422 L629.5 428 M697.7 158 L697.8 164 L697.9 170 L698.0 176 L698.0 182 L698.0 188 L697.9 194 L697.8 200 L697.6 206 L697.4 212 L697.1 218 L696.8 224 L696.4 230 L696.0 236 L695.6 242 L695.1 248 L694.6 254 L694.0 260 L693.4 266 L692.7 272 L692.0 278 L691.2 284 L690.4 290 L689.5 296 L688.6 302 L687.6 308 L686.6 314 L685.5 320 L684.3 326 L683.1 332 L681.9 338 L680.6 344 L679.2 350 L677.8 356 L676.3 362 L674.8 368 L673.2 374 L671.5 380 L669.7 386 L667.9 392 L666.0 398 L664.0 404 L662.0 410 L659.9 416 L657.7 422 L655.4 428 M730.7 158 L730.8 164 L730.9 170 L731.0 176 L731.0 182 L731.0 188 L730.9 194 L730.7 200 L730.5 206 L730.3 212 L730.0 218 L729.6 224 L729.2 230 L728.7 236 L728.2 242 L727.6 248 L727.0 254 L726.3 260 L725.6 266 L724.8 272 L724.0 278 L723.1 284 L722.1 290 L721.1 296 L720.0 302 L718.9 308 L717.7 314 L716.4 320 L715.1 326 L713.7 332 L712.2 338 L710.7 344 L709.1 350 L707.4 356 L705.7 362 L703.9 368 L702.0 374 L700.1 380 L698.0 386 L695.9 392 L693.7 398 L691.4 404 L689.0 410 L686.5 416 L683.9 422 L681.2 428 M763.6 158 L763.8 164 L763.9 170 L764.0 176 L764.0 182 L763.9 188 L763.8 194 L763.7 200 L763.4 206 L763.2 212 L762.8 218 L762.4 224 L761.9 230 L761.4 236 L760.8 242 L760.2 248 L759.4 254 L758.7 260 L757.8 266 L756.9 272 L756.0 278 L754.9 284 L753.8 290 L752.7 296 L751.4 302 L750.1 308 L748.7 314 L747.3 320 L745.8 326 L744.2 332 L742.5 338 L740.8 344 L739.0 350 L737.1 356 L735.1 362 L733.0 368 L730.9 374 L728.6 380 L726.3 386 L723.9 392 L721.3 398 L718.7 404 L716.0 410 L713.2 416 L710.2 422 L707.1 428 M796.6 158 L796.8 164 L796.9 170 L797.0 176 L797.0 182 L796.9 188 L796.8 194 L796.6 200 L796.4 206 L796.0 212 L795.7 218 L795.2 224 L794.7 230 L794.1 236 L793.4 242 L792.7 248 L791.9 254 L791.0 260 L790.1 266 L789.0 272 L787.9 278 L786.8 284 L785.5 290 L784.2 296 L782.8 302 L781.4 308 L779.8 314 L778.2 320 L776.5 326 L774.7 332 L772.8 338 L770.9 344 L768.8 350 L766.7 356 L764.5 362 L762.2 368 L759.7 374 L757.2 380 L754.6 386 L751.9 392 L749.0 398 L746.1 404 L743.0 410 L739.8 416 L736.5 422 L733.0 428" fill="none" stroke="#5c9cff" stroke-opacity="0.22" stroke-width="0.8"/></g></g><defs><clipPath id="cg"><ellipse cx="215" cy="103" rx="32" ry="35"/></clipPath></defs><ellipse cx="211" cy="87.5" rx="58.5" ry="37.5" fill="#28a8d6" fill-opacity="0.78"/><ellipse cx="253" cy="102" rx="56" ry="35" fill="#0f4680" fill-opacity="0.62"/><ellipse cx="258" cy="126.5" rx="57" ry="36.5" fill="#a8426a" fill-opacity="0.78"/><ellipse cx="243" cy="139.5" rx="33" ry="49.5" fill="#3fb2c9" fill-opacity="0.62"/><ellipse cx="208" cy="166.5" rx="33" ry="33.5" fill="#4a2ea8" fill-opacity="0.8"/><ellipse cx="182.5" cy="140" rx="33" ry="37" fill="#8596dc" fill-opacity="0.7"/><ellipse cx="215" cy="103" rx="32" ry="35" fill="#98cc3c" fill-opacity="0.8"/><g clip-path="url(#cg)"><ellipse cx="253" cy="102" rx="56" ry="35" fill="#3c5a1c" fill-opacity="0.14"/><ellipse cx="258" cy="126.5" rx="57" ry="36.5" fill="#e0a020" fill-opacity="0.75"/><ellipse cx="182.5" cy="140" rx="33" ry="37" fill="#d8e8a0" fill-opacity="0.4"/><ellipse cx="243" cy="139.5" rx="33" ry="49.5" fill="#c8d848" fill-opacity="0.92"/><ellipse cx="208" cy="166.5" rx="33" ry="33.5" fill="#9a8ab0" fill-opacity="0.5"/></g><ellipse cx="211" cy="87.5" rx="58.5" ry="37.5" fill="none" stroke="#eef4e0" stroke-opacity="0.5" stroke-width="0.85"/><ellipse cx="253" cy="102" rx="56" ry="35" fill="none" stroke="#eef4e0" stroke-opacity="0.5" stroke-width="0.85"/><ellipse cx="258" cy="126.5" rx="57" ry="36.5" fill="none" stroke="#eef4e0" stroke-opacity="0.5" stroke-width="0.85"/><ellipse cx="243" cy="139.5" rx="33" ry="49.5" fill="none" stroke="#eef4e0" stroke-opacity="0.5" stroke-width="0.85"/><ellipse cx="208" cy="166.5" rx="33" ry="33.5" fill="none" stroke="#eef4e0" stroke-opacity="0.5" stroke-width="0.85"/><ellipse cx="182.5" cy="140" rx="33" ry="37" fill="none" stroke="#eef4e0" stroke-opacity="0.5" stroke-width="0.85"/><ellipse cx="215" cy="103" rx="32" ry="35" fill="none" stroke="#eef4e0" stroke-opacity="0.5" stroke-width="0.85"/><text x="204.0" y="12.9" font-size="6.8" font-weight="bold" fill="#ffffff" stroke="#ffffff" stroke-width="0.25" textLength="54.3" lengthAdjust="spacingAndGlyphs" font-family="Liberation Sans">ОБРАЗОВАНИЕ</text><text x="201.7" y="41.0" font-size="8.6" font-weight="bold" fill="#ffffff" stroke="#ffffff" stroke-width="0.25" textLength="59" lengthAdjust="spacingAndGlyphs" font-family="Liberation Sans">Саморазвитие</text><text x="291.3" y="49.6" font-size="8.6" font-weight="bold" fill="#ffffff" stroke="#ffffff" stroke-width="0.25" textLength="78.1" lengthAdjust="spacingAndGlyphs" font-family="Liberation Sans">Методологическая</text><text x="311.8" y="58.8" font-size="8.6" font-weight="bold" fill="#ffffff" stroke="#ffffff" stroke-width="0.25" textLength="36.8" lengthAdjust="spacingAndGlyphs" font-family="Liberation Sans">культура</text><text x="295.6" y="89.4" font-size="8.6" font-weight="bold" fill="#ffffff" stroke="#ffffff" stroke-width="0.25" textLength="69.2" lengthAdjust="spacingAndGlyphs" font-family="Liberation Sans">Самореализация</text><text x="302.7" y="135.2" font-size="8.2" font-weight="bold" fill="#ffffff" stroke="#ffffff" stroke-width="0.25" textLength="67.3" lengthAdjust="spacingAndGlyphs" font-family="Liberation Sans">Дизайн мышление</text><text x="81.9" y="65.1" font-size="8.6" font-weight="bold" fill="#ffffff" stroke="#ffffff" stroke-width="0.25" textLength="110.9" lengthAdjust="spacingAndGlyphs" font-family="Liberation Sans">Синергетика - нелинейное</text><text x="115.0" y="73.8" font-size="8.6" font-weight="bold" fill="#ffffff" stroke="#ffffff" stroke-width="0.25" textLength="44.7" lengthAdjust="spacingAndGlyphs" font-family="Liberation Sans">мышление</text><text x="92.0" y="113.8" font-size="8.6" font-weight="bold" fill="#ffffff" stroke="#ffffff" stroke-width="0.25" textLength="78.4" lengthAdjust="spacingAndGlyphs" font-family="Liberation Sans">Жизненные планы</text><text x="94.5" y="144.8" font-size="8.2" font-weight="bold" fill="#ffffff" stroke="#ffffff" stroke-width="0.25" textLength="73.7" lengthAdjust="spacingAndGlyphs" font-family="Liberation Sans">Самоорганизация</text><text x="105.2" y="202.7" font-size="8.2" font-weight="bold" fill="#ffffff" stroke="#ffffff" stroke-width="0.25" textLength="130.1" lengthAdjust="spacingAndGlyphs" font-family="Liberation Sans">Режимы мышления по Мэтчету</text><text x="175.8" y="227.1" font-size="8.6" font-weight="bold" fill="#ffffff" stroke="#ffffff" stroke-width="0.25" textLength="125.3" lengthAdjust="spacingAndGlyphs" font-family="Liberation Sans">Интеллектуальный потенциал</text><text x="280.6" y="177.7" font-size="8.6" font-weight="bold" fill="#ffffff" stroke="#ffffff" stroke-width="0.25" textLength="57.3" lengthAdjust="spacingAndGlyphs" font-family="Liberation Sans">Криативность</text><text x="265.0" y="190.0" font-size="8.6" font-weight="bold" fill="#ffffff" stroke="#ffffff" stroke-width="0.25" textLength="90.3" lengthAdjust="spacingAndGlyphs" font-family="Liberation Sans">творчество, фантазия</text><text x="55.5" y="253.5" font-size="11.5" fill="#f0f4ff" stroke="#f0f4ff" stroke-width="0.2" textLength="189.9" lengthAdjust="spacingAndGlyphs" font-family="Liberation Sans">Рис.1. Терминология адаптивного лидера</text><text x="216.5" y="75.1" font-size="6.5" fill="#f3f0b0" fill-opacity="0.75" textLength="31" lengthAdjust="spacingAndGlyphs" font-family="Liberation Sans" font-weight="bold">интеллект</text><path d="M280.6 179.5 q1 -1 2 0 q1 1 2 0 q1 -1 2 0 q1 1 2 0 q1 -1 2 0 q1 1 2 0 q1 -1 2 0 q1 1 2 0 q1 -1 2 0 q1 1 2 0 q1 -1 2 0 q1 1 2 0 q1 -1 2 0 q1 1 2 0 q1 -1 2 0 q1 1 2 0 q1 -1 2 0 q1 1 2 0 q1 -1 2 0 q1 1 2 0 q1 -1 2 0 q1 1 2 0 q1 -1 2 0 q1 1 2 0 q1 -1 2 0 q1 1 2 0 q1 -1 2 0 q1 1 2 0 q1 -1 2 0 q1 1 2 0" fill="none" stroke="#e2404a" stroke-width="0.7"/><path d="M209 204.5 q1 -1 2 0 q1 1 2 0 q1 -1 2 0 q1 1 2 0 q1 -1 2 0 q1 1 2 0 q1 -1 2 0 q1 1 2 0 q1 -1 2 0 q1 1 2 0 q1 -1 2 0 q1 1 2 0 q1 -1 2 0 q1 1 2 0" fill="none" stroke="#e2404a" stroke-width="0.7"/></svg>
<svg style="left:116px;top:242px" width="116" height="74" viewBox="0 0 431 271" preserveAspectRatio="none"><defs><linearGradient id="sbg2" x1="0" y1="0" x2="0" y2="1"><stop offset="0" stop-color="#0064cc"/><stop offset="0.35" stop-color="#005dc2"/><stop offset="0.6" stop-color="#004ea6"/><stop offset="0.8" stop-color="#003c86"/><stop offset="1" stop-color="#002c66"/></linearGradient></defs><rect x="0" y="0" width="431" height="271" fill="url(#sbg2)"/><g mask="url(#mm2)"><path d="M0 50 L431 50 M0 74 L431 74 M0 100 L431 100 M0 125 L431 125 M0 148 L431 148 M0 172 L431 172 M0 197 L431 197 M0 223 L431 223 M0 247 L431 247" fill="none" stroke="#5c9cff" stroke-opacity="0.2" stroke-width="0.8"/></g><defs><linearGradient id="mg2" x1="0" y1="0" x2="0" y2="1"><stop offset="0" stop-color="#fff" stop-opacity="0"/><stop offset="0.3" stop-color="#fff" stop-opacity="0.15"/><stop offset="0.55" stop-color="#fff" stop-opacity="1"/><stop offset="1" stop-color="#fff" stop-opacity="1"/></linearGradient><mask id="mm2" maskUnits="userSpaceOnUse" x="0" y="0" width="431" height="271"><rect x="0" y="0" width="431" height="271" fill="url(#mg2)"/></mask></defs><g mask="url(#mm2)"><g transform="translate(-286 -158)"><path d="M203.4 158 L203.2 164 L203.1 170 L203.0 176 L203.0 182 L203.1 188 L203.2 194 L203.4 200 L203.6 206 L204.0 212 L204.3 218 L204.8 224 L205.3 230 L205.9 236 L206.6 242 L207.3 248 L208.1 254 L209.0 260 L209.9 266 L211.0 272 L212.1 278 L213.2 284 L214.5 290 L215.8 296 L217.2 302 L218.6 308 L220.2 314 L221.8 320 L223.5 326 L225.3 332 L227.2 338 L229.1 344 L231.2 350 L233.3 356 L235.5 362 L237.8 368 L240.3 374 L242.8 380 L245.4 386 L248.1 392 L251.0 398 L253.9 404 L257.0 410 L260.2 416 L263.5 422 L267.0 428 M236.4 158 L236.2 164 L236.1 170 L236.0 176 L236.0 182 L236.1 188 L236.2 194 L236.3 200 L236.6 206 L236.8 212 L237.2 218 L237.6 224 L238.1 230 L238.6 236 L239.2 242 L239.8 248 L240.6 254 L241.3 260 L242.2 266 L243.1 272 L244.0 278 L245.1 284 L246.2 290 L247.3 296 L248.6 302 L249.9 308 L251.3 314 L252.7 320 L254.2 326 L255.8 332 L257.5 338 L259.2 344 L261.0 350 L262.9 356 L264.9 362 L267.0 368 L269.1 374 L271.4 380 L273.7 386 L276.1 392 L278.7 398 L281.3 404 L284.0 410 L286.8 416 L289.8 422 L292.9 428 M269.3 158 L269.2 164 L269.1 170 L269.0 176 L269.0 182 L269.0 188 L269.1 194 L269.3 200 L269.5 206 L269.7 212 L270.0 218 L270.4 224 L270.8 230 L271.3 236 L271.8 242 L272.4 248 L273.0 254 L273.7 260 L274.4 266 L275.2 272 L276.0 278 L276.9 284 L277.9 290 L278.9 296 L280.0 302 L281.1 308 L282.3 314 L283.6 320 L284.9 326 L286.3 332 L287.8 338 L289.3 344 L290.9 350 L292.6 356 L294.3 362 L296.1 368 L298.0 374 L299.9 380 L302.0 386 L304.1 392 L306.3 398 L308.6 404 L311.0 410 L313.5 416 L316.1 422 L318.8 428 M302.3 158 L302.2 164 L302.1 170 L302.0 176 L302.0 182 L302.0 188 L302.1 194 L302.2 200 L302.4 206 L302.6 212 L302.9 218 L303.2 224 L303.6 230 L304.0 236 L304.4 242 L304.9 248 L305.4 254 L306.0 260 L306.6 266 L307.3 272 L308.0 278 L308.8 284 L309.6 290 L310.5 296 L311.4 302 L312.4 308 L313.4 314 L314.5 320 L315.7 326 L316.9 332 L318.1 338 L319.4 344 L320.8 350 L322.2 356 L323.7 362 L325.2 368 L326.8 374 L328.5 380 L330.3 386 L332.1 392 L334.0 398 L336.0 404 L338.0 410 L340.1 416 L342.3 422 L344.6 428 M335.2 158 L335.1 164 L335.1 170 L335.0 176 L335.0 182 L335.0 188 L335.1 194 L335.2 200 L335.3 206 L335.5 212 L335.7 218 L336.0 224 L336.3 230 L336.6 236 L337.0 242 L337.4 248 L337.8 254 L338.3 260 L338.9 266 L339.4 272 L340.0 278 L340.7 284 L341.4 290 L342.1 296 L342.9 302 L343.7 308 L344.5 314 L345.4 320 L346.4 326 L347.4 332 L348.4 338 L349.5 344 L350.6 350 L351.8 356 L353.1 362 L354.4 368 L355.7 374 L357.1 380 L358.6 386 L360.1 392 L361.7 398 L363.3 404 L365.0 410 L366.8 416 L368.6 422 L370.5 428 M368.2 158 L368.1 164 L368.0 170 L368.0 176 L368.0 182 L368.0 188 L368.1 194 L368.2 200 L368.3 206 L368.4 212 L368.6 218 L368.8 224 L369.0 230 L369.3 236 L369.6 242 L369.9 248 L370.3 254 L370.7 260 L371.1 266 L371.5 272 L372.0 278 L372.5 284 L373.1 290 L373.7 296 L374.3 302 L374.9 308 L375.6 314 L376.3 320 L377.1 326 L377.9 332 L378.7 338 L379.6 344 L380.5 350 L381.5 356 L382.5 362 L383.5 368 L384.6 374 L385.7 380 L386.9 386 L388.1 392 L389.3 398 L390.6 404 L392.0 410 L393.4 416 L394.9 422 L396.4 428 M401.1 158 L401.1 164 L401.0 170 L401.0 176 L401.0 182 L401.0 188 L401.1 194 L401.1 200 L401.2 206 L401.3 212 L401.4 218 L401.6 224 L401.8 230 L402.0 236 L402.2 242 L402.4 248 L402.7 254 L403.0 260 L403.3 266 L403.7 272 L404.0 278 L404.4 284 L404.8 290 L405.3 296 L405.7 302 L406.2 308 L406.7 314 L407.3 320 L407.8 326 L408.4 332 L409.1 338 L409.7 344 L410.4 350 L411.1 356 L411.8 362 L412.6 368 L413.4 374 L414.3 380 L415.1 386 L416.0 392 L417.0 398 L418.0 404 L419.0 410 L420.1 416 L421.2 422 L422.3 428 M434.1 158 L434.1 164 L434.0 170 L434.0 176 L434.0 182 L434.0 188 L434.0 194 L434.1 200 L434.1 206 L434.2 212 L434.3 218 L434.4 224 L434.5 230 L434.7 236 L434.8 242 L435.0 248 L435.1 254 L435.3 260 L435.5 266 L435.8 272 L436.0 278 L436.3 284 L436.5 290 L436.8 296 L437.1 302 L437.5 308 L437.8 314 L438.2 320 L438.6 326 L439.0 332 L439.4 338 L439.8 344 L440.3 350 L440.7 356 L441.2 362 L441.7 368 L442.3 374 L442.8 380 L443.4 386 L444.0 392 L444.7 398 L445.3 404 L446.0 410 L446.7 416 L447.4 422 L448.2 428 M467.0 158 L467.0 164 L467.0 170 L467.0 176 L467.0 182 L467.0 188 L467.0 194 L467.0 200 L467.1 206 L467.1 212 L467.1 218 L467.2 224 L467.3 230 L467.3 236 L467.4 242 L467.5 248 L467.6 254 L467.7 260 L467.8 266 L467.9 272 L468.0 278 L468.1 284 L468.3 290 L468.4 296 L468.6 302 L468.7 308 L468.9 314 L469.1 320 L469.3 326 L469.5 332 L469.7 338 L469.9 344 L470.1 350 L470.4 356 L470.6 362 L470.9 368 L471.1 374 L471.4 380 L471.7 386 L472.0 392 L472.3 398 L472.7 404 L473.0 410 L473.4 416 L473.7 422 L474.1 428 M533.0 158 L533.0 164 L533.0 170 L533.0 176 L533.0 182 L533.0 188 L533.0 194 L533.0 200 L532.9 206 L532.9 212 L532.9 218 L532.8 224 L532.7 230 L532.7 236 L532.6 242 L532.5 248 L532.4 254 L532.3 260 L532.2 266 L532.1 272 L532.0 278 L531.9 284 L531.7 290 L531.6 296 L531.4 302 L531.3 308 L531.1 314 L530.9 320 L530.7 326 L530.5 332 L530.3 338 L530.1 344 L529.9 350 L529.6 356 L529.4 362 L529.1 368 L528.9 374 L528.6 380 L528.3 386 L528.0 392 L527.7 398 L527.3 404 L527.0 410 L526.6 416 L526.3 422 L525.9 428 M565.9 158 L565.9 164 L566.0 170 L566.0 176 L566.0 182 L566.0 188 L566.0 194 L565.9 200 L565.9 206 L565.8 212 L565.7 218 L565.6 224 L565.5 230 L565.3 236 L565.2 242 L565.0 248 L564.9 254 L564.7 260 L564.5 266 L564.2 272 L564.0 278 L563.7 284 L563.5 290 L563.2 296 L562.9 302 L562.5 308 L562.2 314 L561.8 320 L561.4 326 L561.0 332 L560.6 338 L560.2 344 L559.7 350 L559.3 356 L558.8 362 L558.3 368 L557.7 374 L557.2 380 L556.6 386 L556.0 392 L555.3 398 L554.7 404 L554.0 410 L553.3 416 L552.6 422 L551.8 428 M598.9 158 L598.9 164 L599.0 170 L599.0 176 L599.0 182 L599.0 188 L598.9 194 L598.9 200 L598.8 206 L598.7 212 L598.6 218 L598.4 224 L598.2 230 L598.0 236 L597.8 242 L597.6 248 L597.3 254 L597.0 260 L596.7 266 L596.3 272 L596.0 278 L595.6 284 L595.2 290 L594.7 296 L594.3 302 L593.8 308 L593.3 314 L592.7 320 L592.2 326 L591.6 332 L590.9 338 L590.3 344 L589.6 350 L588.9 356 L588.2 362 L587.4 368 L586.6 374 L585.7 380 L584.9 386 L584.0 392 L583.0 398 L582.0 404 L581.0 410 L579.9 416 L578.8 422 L577.7 428 M631.8 158 L631.9 164 L632.0 170 L632.0 176 L632.0 182 L632.0 188 L631.9 194 L631.8 200 L631.7 206 L631.6 212 L631.4 218 L631.2 224 L631.0 230 L630.7 236 L630.4 242 L630.1 248 L629.7 254 L629.3 260 L628.9 266 L628.5 272 L628.0 278 L627.5 284 L626.9 290 L626.3 296 L625.7 302 L625.1 308 L624.4 314 L623.7 320 L622.9 326 L622.1 332 L621.3 338 L620.4 344 L619.5 350 L618.5 356 L617.5 362 L616.5 368 L615.4 374 L614.3 380 L613.1 386 L611.9 392 L610.7 398 L609.4 404 L608.0 410 L606.6 416 L605.1 422 L603.6 428 M664.8 158 L664.9 164 L664.9 170 L665.0 176 L665.0 182 L665.0 188 L664.9 194 L664.8 200 L664.7 206 L664.5 212 L664.3 218 L664.0 224 L663.7 230 L663.4 236 L663.0 242 L662.6 248 L662.2 254 L661.7 260 L661.1 266 L660.6 272 L660.0 278 L659.3 284 L658.6 290 L657.9 296 L657.1 302 L656.3 308 L655.5 314 L654.6 320 L653.6 326 L652.6 332 L651.6 338 L650.5 344 L649.4 350 L648.2 356 L646.9 362 L645.6 368 L644.3 374 L642.9 380 L641.4 386 L639.9 392 L638.3 398 L636.7 404 L635.0 410 L633.2 416 L631.4 422 L629.5 428 M697.7 158 L697.8 164 L697.9 170 L698.0 176 L698.0 182 L698.0 188 L697.9 194 L697.8 200 L697.6 206 L697.4 212 L697.1 218 L696.8 224 L696.4 230 L696.0 236 L695.6 242 L695.1 248 L694.6 254 L694.0 260 L693.4 266 L692.7 272 L692.0 278 L691.2 284 L690.4 290 L689.5 296 L688.6 302 L687.6 308 L686.6 314 L685.5 320 L684.3 326 L683.1 332 L681.9 338 L680.6 344 L679.2 350 L677.8 356 L676.3 362 L674.8 368 L673.2 374 L671.5 380 L669.7 386 L667.9 392 L666.0 398 L664.0 404 L662.0 410 L659.9 416 L657.7 422 L655.4 428 M730.7 158 L730.8 164 L730.9 170 L731.0 176 L731.0 182 L731.0 188 L730.9 194 L730.7 200 L730.5 206 L730.3 212 L730.0 218 L729.6 224 L729.2 230 L728.7 236 L728.2 242 L727.6 248 L727.0 254 L726.3 260 L725.6 266 L724.8 272 L724.0 278 L723.1 284 L722.1 290 L721.1 296 L720.0 302 L718.9 308 L717.7 314 L716.4 320 L715.1 326 L713.7 332 L712.2 338 L710.7 344 L709.1 350 L707.4 356 L705.7 362 L703.9 368 L702.0 374 L700.1 380 L698.0 386 L695.9 392 L693.7 398 L691.4 404 L689.0 410 L686.5 416 L683.9 422 L681.2 428 M763.6 158 L763.8 164 L763.9 170 L764.0 176 L764.0 182 L763.9 188 L763.8 194 L763.7 200 L763.4 206 L763.2 212 L762.8 218 L762.4 224 L761.9 230 L761.4 236 L760.8 242 L760.2 248 L759.4 254 L758.7 260 L757.8 266 L756.9 272 L756.0 278 L754.9 284 L753.8 290 L752.7 296 L751.4 302 L750.1 308 L748.7 314 L747.3 320 L745.8 326 L744.2 332 L742.5 338 L740.8 344 L739.0 350 L737.1 356 L735.1 362 L733.0 368 L730.9 374 L728.6 380 L726.3 386 L723.9 392 L721.3 398 L718.7 404 L716.0 410 L713.2 416 L710.2 422 L707.1 428 M796.6 158 L796.8 164 L796.9 170 L797.0 176 L797.0 182 L796.9 188 L796.8 194 L796.6 200 L796.4 206 L796.0 212 L795.7 218 L795.2 224 L794.7 230 L794.1 236 L793.4 242 L792.7 248 L791.9 254 L791.0 260 L790.1 266 L789.0 272 L787.9 278 L786.8 284 L785.5 290 L784.2 296 L782.8 302 L781.4 308 L779.8 314 L778.2 320 L776.5 326 L774.7 332 L772.8 338 L770.9 344 L768.8 350 L766.7 356 L764.5 362 L762.2 368 L759.7 374 L757.2 380 L754.6 386 L751.9 392 L749.0 398 L746.1 404 L743.0 410 L739.8 416 L736.5 422 L733.0 428" fill="none" stroke="#5c9cff" stroke-opacity="0.22" stroke-width="0.8"/></g></g><defs><clipPath id="cg"><ellipse cx="215" cy="103" rx="32" ry="35"/></clipPath></defs><ellipse cx="211" cy="87.5" rx="58.5" ry="37.5" fill="#28a8d6" fill-opacity="0.78"/><ellipse cx="253" cy="102" rx="56" ry="35" fill="#0f4680" fill-opacity="0.62"/><ellipse cx="258" cy="126.5" rx="57" ry="36.5" fill="#a8426a" fill-opacity="0.78"/><ellipse cx="243" cy="139.5" rx="33" ry="49.5" fill="#3fb2c9" fill-opacity="0.62"/><ellipse cx="208" cy="166.5" rx="33" ry="33.5" fill="#4a2ea8" fill-opacity="0.8"/><ellipse cx="182.5" cy="140" rx="33" ry="37" fill="#8596dc" fill-opacity="0.7"/><ellipse cx="215" cy="103" rx="32" ry="35" fill="#98cc3c" fill-opacity="0.8"/><g clip-path="url(#cg)"><ellipse cx="253" cy="102" rx="56" ry="35" fill="#3c5a1c" fill-opacity="0.14"/><ellipse cx="258" cy="126.5" rx="57" ry="36.5" fill="#e0a020" fill-opacity="0.75"/><ellipse cx="182.5" cy="140" rx="33" ry="37" fill="#d8e8a0" fill-opacity="0.4"/><ellipse cx="243" cy="139.5" rx="33" ry="49.5" fill="#c8d848" fill-opacity="0.92"/><ellipse cx="208" cy="166.5" rx="33" ry="33.5" fill="#9a8ab0" fill-opacity="0.5"/></g><ellipse cx="211" cy="87.5" rx="58.5" ry="37.5" fill="none" stroke="#eef4e0" stroke-opacity="0.75" stroke-width="2.6"/><ellipse cx="253" cy="102" rx="56" ry="35" fill="none" stroke="#eef4e0" stroke-opacity="0.75" stroke-width="2.6"/><ellipse cx="258" cy="126.5" rx="57" ry="36.5" fill="none" stroke="#eef4e0" stroke-opacity="0.75" stroke-width="2.6"/><ellipse cx="243" cy="139.5" rx="33" ry="49.5" fill="none" stroke="#eef4e0" stroke-opacity="0.75" stroke-width="2.6"/><ellipse cx="208" cy="166.5" rx="33" ry="33.5" fill="none" stroke="#eef4e0" stroke-opacity="0.75" stroke-width="2.6"/><ellipse cx="182.5" cy="140" rx="33" ry="37" fill="none" stroke="#eef4e0" stroke-opacity="0.75" stroke-width="2.6"/><ellipse cx="215" cy="103" rx="32" ry="35" fill="none" stroke="#eef4e0" stroke-opacity="0.75" stroke-width="2.6"/><text x="204.0" y="12.9" font-size="9.9" font-weight="bold" fill="#ffffff" stroke="#ffffff" stroke-width="0.8" textLength="54.3" lengthAdjust="spacingAndGlyphs" font-family="Liberation Sans">ОБРАЗОВАНИЕ</text><text x="201.7" y="41.0" font-size="12.5" font-weight="bold" fill="#ffffff" stroke="#ffffff" stroke-width="0.8" textLength="59" lengthAdjust="spacingAndGlyphs" font-family="Liberation Sans">Саморазвитие</text><text x="291.3" y="49.6" font-size="12.5" font-weight="bold" fill="#ffffff" stroke="#ffffff" stroke-width="0.8" textLength="78.1" lengthAdjust="spacingAndGlyphs" font-family="Liberation Sans">Методологическая</text><text x="311.8" y="58.8" font-size="12.5" font-weight="bold" fill="#ffffff" stroke="#ffffff" stroke-width="0.8" textLength="36.8" lengthAdjust="spacingAndGlyphs" font-family="Liberation Sans">культура</text><text x="295.6" y="89.4" font-size="12.5" font-weight="bold" fill="#ffffff" stroke="#ffffff" stroke-width="0.8" textLength="69.2" lengthAdjust="spacingAndGlyphs" font-family="Liberation Sans">Самореализация</text><text x="302.7" y="135.2" font-size="11.9" font-weight="bold" fill="#ffffff" stroke="#ffffff" stroke-width="0.8" textLength="67.3" lengthAdjust="spacingAndGlyphs" font-family="Liberation Sans">Дизайн мышление</text><text x="81.9" y="65.1" font-size="12.5" font-weight="bold" fill="#ffffff" stroke="#ffffff" stroke-width="0.8" textLength="110.9" lengthAdjust="spacingAndGlyphs" font-family="Liberation Sans">Синергетика - нелинейное</text><text x="115.0" y="73.8" font-size="12.5" font-weight="bold" fill="#ffffff" stroke="#ffffff" stroke-width="0.8" textLength="44.7" lengthAdjust="spacingAndGlyphs" font-family="Liberation Sans">мышление</text><text x="92.0" y="113.8" font-size="12.5" font-weight="bold" fill="#ffffff" stroke="#ffffff" stroke-width="0.8" textLength="78.4" lengthAdjust="spacingAndGlyphs" font-family="Liberation Sans">Жизненные планы</text><text x="94.5" y="144.8" font-size="11.9" font-weight="bold" fill="#ffffff" stroke="#ffffff" stroke-width="0.8" textLength="73.7" lengthAdjust="spacingAndGlyphs" font-family="Liberation Sans">Самоорганизация</text><text x="105.2" y="202.7" font-size="11.9" font-weight="bold" fill="#ffffff" stroke="#ffffff" stroke-width="0.8" textLength="130.1" lengthAdjust="spacingAndGlyphs" font-family="Liberation Sans">Режимы мышления по Мэтчету</text><text x="175.8" y="227.1" font-size="12.5" font-weight="bold" fill="#ffffff" stroke="#ffffff" stroke-width="0.8" textLength="125.3" lengthAdjust="spacingAndGlyphs" font-family="Liberation Sans">Интеллектуальный потенциал</text><text x="280.6" y="177.7" font-size="12.5" font-weight="bold" fill="#ffffff" stroke="#ffffff" stroke-width="0.8" textLength="57.3" lengthAdjust="spacingAndGlyphs" font-family="Liberation Sans">Криативность</text><text x="265.0" y="190.0" font-size="12.5" font-weight="bold" fill="#ffffff" stroke="#ffffff" stroke-width="0.8" textLength="90.3" lengthAdjust="spacingAndGlyphs" font-family="Liberation Sans">творчество, фантазия</text><text x="55.5" y="253.5" font-size="16.7" fill="#f0f4ff" stroke="#f0f4ff" stroke-width="0.2" textLength="189.9" lengthAdjust="spacingAndGlyphs" font-family="Liberation Sans">Рис.1. Терминология адаптивного лидера</text><text x="216.5" y="75.1" font-size="9.4" fill="#f3f0b0" fill-opacity="0.75" textLength="31" lengthAdjust="spacingAndGlyphs" font-family="Liberation Sans" font-weight="bold">интеллект</text><path d="M280.6 179.5 q1 -1 2 0 q1 1 2 0 q1 -1 2 0 q1 1 2 0 q1 -1 2 0 q1 1 2 0 q1 -1 2 0 q1 1 2 0 q1 -1 2 0 q1 1 2 0 q1 -1 2 0 q1 1 2 0 q1 -1 2 0 q1 1 2 0 q1 -1 2 0 q1 1 2 0 q1 -1 2 0 q1 1 2 0 q1 -1 2 0 q1 1 2 0 q1 -1 2 0 q1 1 2 0 q1 -1 2 0 q1 1 2 0 q1 -1 2 0 q1 1 2 0 q1 -1 2 0 q1 1 2 0 q1 -1 2 0 q1 1 2 0" fill="none" stroke="#e2404a" stroke-width="0.7"/><path d="M209 204.5 q1 -1 2 0 q1 1 2 0 q1 -1 2 0 q1 1 2 0 q1 -1 2 0 q1 1 2 0 q1 -1 2 0 q1 1 2 0 q1 -1 2 0 q1 1 2 0 q1 -1 2 0 q1 1 2 0 q1 -1 2 0 q1 1 2 0" fill="none" stroke="#e2404a" stroke-width="0.7"/></svg>
<div class="a" style="left:114px;top:240px;width:120px;height:2px;background:#c4391b;"></div>
<div class="a" style="left:114px;top:316px;width:120px;height:2px;background:#c4391b;"></div>
<div class="a" style="left:114px;top:240px;width:2px;height:78px;background:#c4391b;"></div>
<div class="a" style="left:232px;top:240px;width:2px;height:78px;background:#c4391b;"></div>
<svg style="left:116px;top:159px" width="116" height="73" viewBox="0 0 116 73"><defs><linearGradient id="tg37" x1="0" y1="0" x2="0" y2="1"><stop offset="0" stop-color="#0a63d2"/><stop offset="0.45" stop-color="#0a5cc6"/><stop offset="0.75" stop-color="#0a4aa4"/><stop offset="1" stop-color="#06306e"/></linearGradient></defs><rect width="116" height="73" fill="url(#tg37)"/><text x="58" y="8" font-size="3.4" fill="#f2b01e" font-weight="bold" text-anchor="middle" font-family="Liberation Sans" font-style="italic" textLength="84" lengthAdjust="spacingAndGlyphs">характеристики высшего уровня компетентности</text><text x="58" y="12" font-size="3.4" fill="#f2b01e" font-weight="bold" text-anchor="middle" font-family="Liberation Sans" font-style="italic" textLength="60" lengthAdjust="spacingAndGlyphs">ПРЕПОДАВАТЕЛЕЙ И СТУДЕНТОВ вуза</text><text x="14" y="21.5" font-size="2.9" fill="#e6eeff" font-family="Liberation Sans" font-weight="bold" textLength="64" lengthAdjust="spacingAndGlyphs">•  высокий профессиональный потенциал ППС и студентов</text><text x="14" y="24.8" font-size="2.9" fill="#e6eeff" font-family="Liberation Sans" font-weight="bold" textLength="80" lengthAdjust="spacingAndGlyphs">- креативное отношение к действительности;</text><text x="11" y="28.1" font-size="2.9" fill="#e6eeff" font-family="Liberation Sans" font-weight="bold" textLength="96" lengthAdjust="spacingAndGlyphs">- опыт ответственных решений, открытость в обучении, воспитании и</text><text x="11" y="31.4" font-size="2.9" fill="#e6eeff" font-family="Liberation Sans" font-weight="bold" textLength="52" lengthAdjust="spacingAndGlyphs">развитии личности будущего специалиста;</text><text x="14" y="34.7" font-size="2.9" fill="#e6eeff" font-family="Liberation Sans" font-weight="bold" textLength="96" lengthAdjust="spacingAndGlyphs">•  способность своевременно избавляться от устаревших</text><text x="11" y="38.0" font-size="2.9" fill="#e6eeff" font-family="Liberation Sans" font-weight="bold" textLength="44" lengthAdjust="spacingAndGlyphs">педагогических представлений;</text><text x="14" y="41.3" font-size="2.9" fill="#e6eeff" font-family="Liberation Sans" font-weight="bold" textLength="82" lengthAdjust="spacingAndGlyphs">•  устремленность на поиски альтернатив инновационных;</text><text x="14" y="44.6" font-size="2.9" fill="#e6eeff" font-family="Liberation Sans" font-weight="bold" textLength="96" lengthAdjust="spacingAndGlyphs">•  исследовательский интерес к инновационным, выход на уровень</text><text x="11" y="47.9" font-size="2.9" fill="#e6eeff" font-family="Liberation Sans" font-weight="bold" textLength="96" lengthAdjust="spacingAndGlyphs">действующих педагогов, стремление к переосмыслению</text><text x="11" y="51.2" font-size="2.9" fill="#e6eeff" font-family="Liberation Sans" font-weight="bold" textLength="30" lengthAdjust="spacingAndGlyphs">собственного опыта;</text><text x="14" y="54.5" font-size="2.9" fill="#e6eeff" font-family="Liberation Sans" font-weight="bold" textLength="96" lengthAdjust="spacingAndGlyphs">•  владение современными инновационными технологиями, ИКТ,</text><text x="11" y="57.8" font-size="2.9" fill="#e6eeff" font-family="Liberation Sans" font-weight="bold" textLength="66" lengthAdjust="spacingAndGlyphs">смарт- и стем- технологиями в том числе</text></svg>
<svg style="left:116px;top:325px" width="116" height="73" viewBox="0 0 116 73"><defs><linearGradient id="tg39" x1="0" y1="0" x2="0" y2="1"><stop offset="0" stop-color="#0a63d2"/><stop offset="0.45" stop-color="#0a5cc6"/><stop offset="0.75" stop-color="#0a4aa4"/><stop offset="1" stop-color="#06306e"/></linearGradient></defs><rect width="116" height="73" fill="url(#tg39)"/><text x="58" y="11.5" font-size="5.5" fill="#0b2c70" text-anchor="middle" font-family="Liberation Sans">Литература</text><text x="8" y="27.0" font-size="2.6" fill="#e8efff" font-family="Liberation Sans" font-weight="bold" textLength="92" lengthAdjust="spacingAndGlyphs">1. Алдамуратов Г. Современные педагогические технологии обучения, Алматы 2018</text><text x="8" y="29.8" font-size="2.6" fill="#e8efff" font-family="Liberation Sans" font-weight="bold" textLength="96" lengthAdjust="spacingAndGlyphs">2. Алдамуратов Г. Современные педагогические технологии обучения, Алматы 2018</text><text x="8" y="32.5" font-size="2.6" fill="#e8efff" font-family="Liberation Sans" font-weight="bold" textLength="96" lengthAdjust="spacingAndGlyphs">3. Алдамуратов Г. Современные педагогические технологии обучения, Алматы 2018</text><text x="8" y="35.2" font-size="2.6" fill="#e8efff" font-family="Liberation Sans" font-weight="bold" textLength="90" lengthAdjust="spacingAndGlyphs">4. Алдамуратов Г. Современные педагогические технологии обучения, Алматы 2018</text><text x="8" y="38.0" font-size="2.6" fill="#e8efff" font-family="Liberation Sans" font-weight="bold" textLength="94" lengthAdjust="spacingAndGlyphs">5. Алдамуратов Г. Современные педагогические технологии обучения, Алматы 2018</text><text x="8" y="40.8" font-size="2.6" fill="#e8efff" font-family="Liberation Sans" font-weight="bold" textLength="70" lengthAdjust="spacingAndGlyphs">6. Алдамуратов Г. Современные педагогические технологии обучения, Алматы 2018</text><text x="8" y="43.5" font-size="2.6" fill="#e8efff" font-family="Liberation Sans" font-weight="bold" textLength="96" lengthAdjust="spacingAndGlyphs">7. Алдамуратов Г. Современные педагогические технологии обучения, Алматы 2018</text><text x="8" y="46.2" font-size="2.6" fill="#e8efff" font-family="Liberation Sans" font-weight="bold" textLength="92" lengthAdjust="spacingAndGlyphs">8. Алдамуратов Г. Современные педагогические технологии обучения, Алматы 2018</text><text x="8" y="49.0" font-size="2.6" fill="#e8efff" font-family="Liberation Sans" font-weight="bold" textLength="88" lengthAdjust="spacingAndGlyphs">9. Алдамуратов Г. Современные педагогические технологии обучения, Алматы 2018</text><text x="8" y="51.8" font-size="2.6" fill="#e8efff" font-family="Liberation Sans" font-weight="bold" textLength="96" lengthAdjust="spacingAndGlyphs">10. Алдамуратов Г. Современные педагогические технологии обучения, Алматы 2018</text><text x="8" y="54.5" font-size="2.6" fill="#e8efff" font-family="Liberation Sans" font-weight="bold" textLength="90" lengthAdjust="spacingAndGlyphs">11. Алдамуратов Г. Современные педагогические технологии обучения, Алматы 2018</text><text x="8" y="57.2" font-size="2.6" fill="#e8efff" font-family="Liberation Sans" font-weight="bold" textLength="94" lengthAdjust="spacingAndGlyphs">12. Алдамуратов Г. Современные педагогические технологии обучения, Алматы 2018</text><text x="8" y="60.0" font-size="2.6" fill="#e8efff" font-family="Liberation Sans" font-weight="bold" textLength="92" lengthAdjust="spacingAndGlyphs">13. Алдамуратов Г. Современные педагогические технологии обучения, Алматы 2018</text><text x="8" y="62.8" font-size="2.6" fill="#e8efff" font-family="Liberation Sans" font-weight="bold" textLength="86" lengthAdjust="spacingAndGlyphs">14. Алдамуратов Г. Современные педагогические технологии обучения, Алматы 2018</text><text x="8" y="65.5" font-size="2.6" fill="#e8efff" font-family="Liberation Sans" font-weight="bold" textLength="96" lengthAdjust="spacingAndGlyphs">15. Алдамуратов Г. Современные педагогические технологии обучения, Алматы 2018</text><text x="8" y="68.2" font-size="2.6" fill="#e8efff" font-family="Liberation Sans" font-weight="bold" textLength="90" lengthAdjust="spacingAndGlyphs">16. Алдамуратов Г. Современные педагогические технологии обучения, Алматы 2018</text><text x="8" y="71.0" font-size="2.6" fill="#e8efff" font-family="Liberation Sans" font-weight="bold" textLength="80" lengthAdjust="spacingAndGlyphs">17. Алдамуратов Г. Современные педагогические технологии обучения, Алматы 2018</text></svg>
<svg style="left:116px;top:408px" width="116" height="43" viewBox="0 0 116 43"><defs><linearGradient id="tg40" x1="0" y1="0" x2="0" y2="1"><stop offset="0" stop-color="#0a63d2"/><stop offset="1" stop-color="#0a54b8"/></linearGradient></defs><rect width="116" height="43" fill="url(#tg40)"/><text x="58" y="37" font-size="5" fill="#0a2a6a" text-anchor="middle" font-family="Liberation Sans">БЛАГОДАРЮ ЗА ВНИМАНИЕ !</text></svg>
<div class="a" style="left:196px;top:318px;width:38px;height:11px;background:#ffffff;border:1px solid #cfcfcf"></div>
<svg style="left:195px;top:311px" width="8" height="10" viewBox="0 0 8 10"><path d="M1 0.5 V8 L2.8 6.3 L4.2 9.3 L5.3 8.8 L3.9 5.8 H6.3 Z" fill="#fff" stroke="#222" stroke-width="0.6"/></svg>
<div class="a" style="left:0px;top:462px;width:833px;height:35px;background:#1b1b1b;"></div>
<svg style="left:0;top:462px" width="833" height="35" viewBox="0 462 833 35">
<!-- mic muted -->
<rect x="29" y="464.5" width="6.5" height="11" rx="3.2" fill="#c9c9c9"/>
<path d="M26.5 471.5 Q26.5 477.5 32.2 477.5 Q38 477.5 38 471.5 M32.2 477.5 V481 M29 481 H35.5" fill="none" stroke="#c9c9c9" stroke-width="1"/>
<path d="M25 482 L39.5 465" stroke="#e4393c" stroke-width="1.1"/>
<path d="M53 474.5 L55.5 472 L58 474.5" fill="none" stroke="#c9c9c9" stroke-width="1"/>
<!-- video -->
<rect x="91" y="467.5" width="11" height="11" rx="2" fill="#c9c9c9"/><path d="M103 471 L107 468.5 V477.5 L103 475 Z" fill="#c9c9c9"/>
<path d="M125 474.5 L127.5 472 L130 474.5" fill="none" stroke="#c9c9c9" stroke-width="1"/>
<!-- shield -->
<path d="M225.4 466 L231 468.5 V473 C231 477 228.6 479.6 225.4 481 C222.2 479.6 219.8 477 219.8 473 V468.5 Z" fill="#c9c9c9"/>
<path d="M225.4 466 V481 C222.2 479.6 219.8 477 219.8 473 V473.5 H231 V473 C231 477 228.6 479.6 225.4 481 Z" fill="#1b1b1b" opacity="0"/>
<path d="M225.4 467.3 V473.5 H221 V468.9 Z M225.4 473.5 H230 C229.8 476.6 228 478.7 225.4 479.8 Z" fill="#1b1b1b"/>
<!-- participants -->
<circle cx="290" cy="468.8" r="2.6" fill="#c9c9c9"/><path d="M285 478.5 Q285 472.6 290 472.6 Q295 472.6 295 478.5 Z" fill="#c9c9c9"/>
<circle cx="297.3" cy="470" r="2.4" fill="#c9c9c9"/><path d="M293.5 478.5 Q293.8 473.5 297.3 473.5 Q301 473.5 301.2 478.5 Z" fill="#c9c9c9"/>
<path d="M323.5 474.5 L326 472 L328.5 474.5" fill="none" stroke="#c9c9c9" stroke-width="1"/>
<!-- chat -->
<path d="M351.5 466 H364 Q365 466 365 467 V475 Q365 476 364 476 H357 L354 479 V476 H351.5 Q350.5 476 350.5 475 V467 Q350.5 466 351.5 466 Z" fill="#c9c9c9"/>
<!-- share -->
<rect x="416" y="467" width="15" height="12.5" rx="1.5" fill="#23d15d"/>
<path d="M423.5 476.5 V470.5 M421.2 472.7 L423.5 470.3 L425.8 472.7" fill="none" stroke="#0b2a14" stroke-width="1.3"/>
<path d="M456.5 474.5 L459 472 L461.5 474.5" fill="none" stroke="#c9c9c9" stroke-width="1"/>
<!-- record -->
<circle cx="490.3" cy="472.8" r="6.4" fill="none" stroke="#c9c9c9" stroke-width="1.1"/><circle cx="490.3" cy="472.8" r="4.4" fill="#c9c9c9"/>
<!-- breakout -->
<rect x="543.5" y="466.5" width="5.5" height="5.5" rx="0.8" fill="#c9c9c9"/><rect x="550.5" y="466.5" width="5.5" height="5.5" rx="0.8" fill="#c9c9c9"/><rect x="543.5" y="473.5" width="5.5" height="5.5" rx="0.8" fill="#c9c9c9"/><rect x="550.5" y="473.5" width="5.5" height="5.5" rx="0.8" fill="#c9c9c9"/>
<!-- reactions -->
<circle cx="608.5" cy="473.5" r="5.8" fill="#c9c9c9"/><circle cx="606.5" cy="472.3" r="0.8" fill="#1b1b1b"/><circle cx="610.5" cy="472.3" r="0.8" fill="#1b1b1b"/><path d="M606 475 Q608.5 477.5 611 475" fill="none" stroke="#1b1b1b" stroke-width="0.9"/>
<path d="M613.5 465 V469 M611.5 467 H615.5" stroke="#c9c9c9" stroke-width="1"/>
<!-- apps -->
<path d="M657 474.8 V470.3 Q657 468.6 658.7 468.6 H660.8 M665.3 473.5 V476.8 Q665.3 478.5 663.6 478.5 H661.5" fill="none" stroke="#c9c9c9" stroke-width="1.2"/>
<circle cx="663.8" cy="470.3" r="1.7" fill="none" stroke="#c9c9c9" stroke-width="1.1"/><circle cx="658" cy="477" r="1.7" fill="none" stroke="#c9c9c9" stroke-width="1.1"/>
</svg>
<div class="a" style="left:768.4px;top:470.5px;width:58.6px;height:18.4px;background:#c4262b;border-radius:4px"></div>
<div class="a" style="left:0px;top:495px;width:833px;height:2px;background:#080808;"></div>
<div class="a" style="left:0px;top:497px;width:833px;height:28px;background:#d7e4ec;"></div>
<div class="a" style="left:0px;top:497px;width:833px;height:1px;background:#e6f2f6;"></div>
<svg style="left:0;top:497px" width="833" height="28" viewBox="0 497 833 28">
<!-- start -->
<path d="M10.5 506.8 L14.9 506.1 V510.6 H10.5 Z M15.9 506 L21 505.2 V510.6 H15.9 Z M10.5 511.6 H14.9 V516.1 L10.5 515.4 Z M15.9 511.6 H21 V517 L15.9 516.2 Z" fill="#1a1a1a"/>
<!-- search -->
<circle cx="46.5" cy="509.8" r="3.3" fill="none" stroke="#1a1a1a" stroke-width="1.2"/><path d="M44.2 512.2 L41 515.5" stroke="#1a1a1a" stroke-width="1.3"/>
<!-- cortana -->
<circle cx="74" cy="511.5" r="4.2" fill="none" stroke="#1a1a1a" stroke-width="1.5"/>
<!-- task view -->
<rect x="100" y="508" width="6" height="7" fill="none" stroke="#333" stroke-width="1"/><path d="M98 506 H108 M98 517 H108" stroke="#333" stroke-width="1"/><path d="M109.5 507 V516" stroke="#333" stroke-width="1"/>
<!-- edge -->
<circle cx="134.5" cy="511.5" r="7.3" fill="#1e8fdc"/>
<path d="M134.5 504.2 A7.3 7.3 0 0 1 141.8 511" fill="none" stroke="#5fd07a" stroke-width="2.6"/>
<circle cx="136.3" cy="512.6" r="3.4" fill="#0c4f9c"/>
<path d="M137.5 510 Q141.5 511 141.6 514.5 Q139.5 517.5 136.5 516 Z" fill="#37b8ee"/>
<!-- explorer -->
<path d="M157.5 505 H163 L164.5 507 H172 V518 H157.5 Z" fill="#f6c04d"/><rect x="157.5" y="508.5" width="14.5" height="9.5" fill="#ffd866"/><rect x="161.5" y="512" width="6.5" height="6" fill="#2d7fd6"/><rect x="163" y="514" width="3.5" height="4" fill="#ffd866"/>
<!-- store -->
<path d="M187 507.5 H199.5 V518.5 H187 Z" fill="#2f2f2f"/><path d="M190.5 507.5 V505.5 Q190.5 503.5 193.2 503.5 Q196 503.5 196 505.5 V507.5" fill="none" stroke="#2f2f2f" stroke-width="1"/>
<rect x="190" y="510.5" width="3" height="3" fill="#f25022"/><rect x="193.6" y="510.5" width="3" height="3" fill="#7fba00"/><rect x="190" y="514" width="3" height="3" fill="#00a4ef"/><rect x="193.6" y="514" width="3" height="3" fill="#ffb900"/>
<!-- mail -->
<path d="M216.5 509 L223.8 504.5 L231 509 V518 H216.5 Z" fill="#1f86d6"/><path d="M216.5 509 L223.8 514 L231 509" fill="none" stroke="#bfe3ff" stroke-width="0.9"/><path d="M216.5 518 L223.8 513.2 L231 518 Z" fill="#46a7f0"/>
<!-- webex -->
<rect x="246.5" y="503.5" width="15" height="15.5" rx="3" fill="#0a0a0a"/>
<ellipse cx="251.8" cy="511.3" rx="2.9" ry="3.8" fill="none" stroke="#3a8ef0" stroke-width="1.7"/>
<ellipse cx="256.2" cy="511.3" rx="2.9" ry="3.8" fill="none" stroke="#3fd28a" stroke-width="1.7"/>
<!-- teams -->
<circle cx="288" cy="506.8" r="2.4" fill="#7b83eb"/><rect x="283.5" y="509.5" width="9.5" height="8" rx="2" fill="#7b83eb"/><rect x="277.5" y="507" width="9.5" height="9.5" rx="1" fill="#4b53bc"/><path d="M279.8 509.3 H284.7 M282.2 509.3 V514.5" stroke="#fff" stroke-width="1.2"/><circle cx="291.5" cy="516.2" r="3.2" fill="#92c353"/><path d="M289.8 516.3 L291 517.5 L293.3 515" fill="none" stroke="#fff" stroke-width="0.9"/>
<!-- chrome -->
<circle cx="313.6" cy="511.5" r="7.5" fill="#db4437"/><path d="M313.6 511.5 L307.1 515.25 A7.5 7.5 0 0 0 320.1 515.25 Z" fill="#0f9d58"/><path d="M313.6 511.5 L320.1 515.25 A7.5 7.5 0 0 0 313.6 504 Z" fill="#ffcd40"/><path d="M313.6 504 A7.5 7.5 0 0 0 306.1 511.5 L313.6 511.5 Z" fill="#db4437"/><circle cx="313.6" cy="511.5" r="3.4" fill="#fff"/><circle cx="313.6" cy="511.5" r="2.6" fill="#4285f4"/>
<!-- word -->
<rect x="340" y="504" width="11" height="14" fill="#f4f7fb" stroke="#9fb6d6" stroke-width="0.7"/><path d="M342 507 H349 M342 509.5 H349 M342 512 H349 M342 514.5 H349" stroke="#a9bbd6" stroke-width="0.7"/><rect x="336.5" y="506" width="8.5" height="10" fill="#2b579a"/><text x="337.6" y="514" font-size="7" font-weight="bold" fill="#fff" font-family="Liberation Sans">W</text>
<!-- zoom highlight -->
<rect x="358.5" y="497" width="27.5" height="26" fill="#e8eff5"/>
<rect x="365" y="503.5" width="16" height="16" rx="5" fill="#4a8cf2"/><rect x="368" y="508.5" width="6.5" height="6" rx="1" fill="#fff"/><path d="M375 510.5 L378 508.8 V514.3 L375 512.5 Z" fill="#fff"/>
<!-- ppt -->
<rect x="400" y="504" width="10" height="14" fill="#fbeee9" stroke="#e0a896" stroke-width="0.7"/><rect x="396" y="506" width="9" height="10" fill="#d24726"/><text x="398" y="514" font-size="7" font-weight="bold" fill="#fff" font-family="Liberation Sans">P</text><circle cx="406" cy="510" r="2.2" fill="none" stroke="#e06d4f" stroke-width="1.2"/>
<!-- underlines -->
<g fill="#2f7ed8"><rect x="122" y="523" width="25" height="2"/><rect x="152" y="523" width="25" height="2"/><rect x="242" y="523" width="24" height="2"/><rect x="272" y="523" width="24" height="2"/><rect x="302" y="523" width="24" height="2"/><rect x="332" y="523" width="24" height="2"/><rect x="360" y="523" width="25" height="2"/><rect x="392" y="523" width="24" height="2"/></g>
<!-- sun -->
<circle cx="585.4" cy="511.7" r="5.3" fill="#f7b21b"/><circle cx="584.4" cy="510.5" r="3.5" fill="#ffc93c"/>
<!-- tray -->
<path d="M670.5 513.5 L673.5 510.2 L676.5 513.5" fill="none" stroke="#111" stroke-width="1.1"/>
<rect x="686.3" y="505.5" width="3.6" height="7" rx="1.7" fill="#111"/><path d="M685 511 Q685 514.3 688.1 514.3 Q691.2 514.3 691.2 511 M688.1 514.3 V516.5 M686.5 516.8 H689.7" fill="none" stroke="#111" stroke-width="0.9"/>
<rect x="699" y="508" width="9" height="6" fill="#111"/><rect x="697.5" y="509.5" width="1.5" height="3" fill="#111"/><path d="M700 505.5 H703" stroke="#111" stroke-width="1.4"/>
<path d="M712.8 516.5 A7 7 0 0 1 720 509 M715.2 516.5 A4.6 4.6 0 0 1 720 511.6 M717.6 516.5 A2.2 2.2 0 0 1 720 514.1" fill="none" stroke="#222" stroke-width="1.1"/><path d="M719.5 514.5 L722.5 517" stroke="#222" stroke-width="1"/>
<path d="M727.5 509.3 H729.5 L732 507 V516 L729.5 513.7 H727.5 Z" fill="none" stroke="#111" stroke-width="0.9"/><path d="M733.5 509.5 Q735 511.5 733.5 513.5 M735.5 508 Q738 511.5 735.5 515" fill="none" stroke="#111" stroke-width="0.8"/>
<!-- notification -->
<path d="M809 504.5 H819.5 V513.5 H814 L811 516.3 V513.5 H809 Z" fill="#111"/><path d="M811 507 H817.5 M811 509 H817.5 M811 511 H815" stroke="#d9e4ed" stroke-width="0.6"/>
<circle cx="818.3" cy="515.8" r="3.9" fill="#d9e4ed" stroke="#333" stroke-width="0.7"/><text x="818.3" y="518.2" font-size="6.5" fill="#111" text-anchor="middle" font-family="Liberation Sans">1</text>
</svg>
<svg style="left:0;top:0" width="833" height="525" viewBox="0 0 833 525">
<text x="15.0" y="11.4" font-size="9.5" fill="#1a1a1a" textLength="94.5" lengthAdjust="spacingAndGlyphs" stroke="#1a1a1a" stroke-width="0.2" font-family="Liberation Sans" text-anchor="start">Zoom Конференция, 40 мин</text>
<text x="281.0" y="10.5" font-size="9" fill="#1b3322" textLength="166.0" lengthAdjust="spacingAndGlyphs" stroke="#1b3322" stroke-width="0.2" font-family="Liberation Sans" text-anchor="start">Вы просматриваете экран Khorlan Zhanpeisova</text>
<text x="475.3" y="10.3" font-size="8.5" fill="#f2f2f2" font-weight="bold" textLength="73.6" lengthAdjust="spacingAndGlyphs" font-family="Liberation Sans" text-anchor="start">Настройки просмотра</text>
<text x="133.0" y="75.8" font-size="9.3" fill="#f4f4f4" textLength="73.0" lengthAdjust="spacingAndGlyphs" stroke="#f4f4f4" stroke-width="0.2" font-family="Liberation Sans" text-anchor="start">Айман Берикжанова</text>
<text x="221.0" y="75.8" font-size="9.3" fill="#f4f4f4" textLength="76.0" lengthAdjust="spacingAndGlyphs" stroke="#f4f4f4" stroke-width="0.2" font-family="Liberation Sans" text-anchor="start">Khorlan Zhanpeisova</text>
<text x="321.0" y="75.8" font-size="9.3" fill="#f4f4f4" textLength="69.0" lengthAdjust="spacingAndGlyphs" stroke="#f4f4f4" stroke-width="0.2" font-family="Liberation Sans" text-anchor="start">Akmaral Magauova</text>
<text x="431.4" y="75.8" font-size="9.3" fill="#f4f4f4" textLength="32.3" lengthAdjust="spacingAndGlyphs" stroke="#f4f4f4" stroke-width="0.2" font-family="Liberation Sans" text-anchor="start">Исламия</text>
<text x="531.0" y="75.8" font-size="9.3" fill="#f4f4f4" textLength="57.2" lengthAdjust="spacingAndGlyphs" stroke="#f4f4f4" stroke-width="0.2" font-family="Liberation Sans" text-anchor="start">Асель Танатова</text>
<text x="630.7" y="75.8" font-size="9.3" fill="#f4f4f4" textLength="74.9" lengthAdjust="spacingAndGlyphs" stroke="#f4f4f4" stroke-width="0.2" font-family="Liberation Sans" text-anchor="start">Svetlana Zhumasheva</text>
<text x="447.3" y="51.7" font-size="11" fill="#f2f2f2" font-weight="bold" textLength="39.1" lengthAdjust="spacingAndGlyphs" font-family="Liberation Sans" text-anchor="start">Исламия</text>
<text x="531.5" y="51.7" font-size="11" fill="#f2f2f2" font-weight="bold" textLength="69.3" lengthAdjust="spacingAndGlyphs" font-family="Liberation Sans" text-anchor="start">Асель Танатова</text>
<text x="813.1" y="32.6" font-size="9.2" fill="#eeeeee" textLength="13.1" lengthAdjust="spacingAndGlyphs" font-family="Liberation Sans" text-anchor="start">Вид</text>
<text x="332.3" y="91.4" font-size="7" fill="#ffffff" textLength="170.0" lengthAdjust="spacingAndGlyphs" font-family="Liberation Sans" text-anchor="start">Методологический семинар— копия.ppt[Compatibility Mode]   -   PowerPoint</text>
<text x="625.0" y="91.0" font-size="7.3" fill="#ffffff" textLength="14.5" lengthAdjust="spacingAndGlyphs" font-family="Liberation Sans" text-anchor="start">Admin</text>
<text x="107.7" y="106.9" font-size="7.2" fill="#ffffff" textLength="12.0" lengthAdjust="spacingAndGlyphs" font-family="Liberation Sans" text-anchor="start">Файл</text>
<text x="130.0" y="106.9" font-size="7.2" fill="#c0462a" textLength="19.2" lengthAdjust="spacingAndGlyphs" font-family="Liberation Sans" text-anchor="start">Главная</text>
<text x="157.6" y="106.9" font-size="7.2" fill="#ffffff" textLength="17.3" lengthAdjust="spacingAndGlyphs" font-family="Liberation Sans" text-anchor="start">Вставка</text>
<text x="183.6" y="106.9" font-size="7.2" fill="#ffffff" textLength="29.2" lengthAdjust="spacingAndGlyphs" font-family="Liberation Sans" text-anchor="start">Конструктор</text>
<text x="221.2" y="106.9" font-size="7.2" fill="#ffffff" textLength="24.1" lengthAdjust="spacingAndGlyphs" font-family="Liberation Sans" text-anchor="start">Переходы</text>
<text x="253.7" y="106.9" font-size="7.2" fill="#ffffff" textLength="24.4" lengthAdjust="spacingAndGlyphs" font-family="Liberation Sans" text-anchor="start">Анимация</text>
<text x="286.7" y="106.9" font-size="7.2" fill="#ffffff" textLength="25.0" lengthAdjust="spacingAndGlyphs" font-family="Liberation Sans" text-anchor="start">Слайд-шоу</text>
<text x="320.3" y="106.9" font-size="7.2" fill="#ffffff" textLength="39.4" lengthAdjust="spacingAndGlyphs" font-family="Liberation Sans" text-anchor="start">Рецензирование</text>
<text x="368.4" y="106.9" font-size="7.2" fill="#ffffff" textLength="8.8" lengthAdjust="spacingAndGlyphs" font-family="Liberation Sans" text-anchor="start">Вид</text>
<text x="385.6" y="106.9" font-size="7.2" fill="#ffffff" textLength="19.2" lengthAdjust="spacingAndGlyphs" font-family="Liberation Sans" text-anchor="start">Справка</text>
<text x="425.3" y="106.9" font-size="7.2" fill="#ffffff" textLength="44.4" lengthAdjust="spacingAndGlyphs" font-family="Liberation Sans" text-anchor="start">Что вы хотите сделать?</text>
<text x="696.6" y="107.3" font-size="7.2" fill="#ffffff" textLength="27.4" lengthAdjust="spacingAndGlyphs" font-family="Liberation Sans" text-anchor="start">Поделиться</text>
<text x="105.5" y="136.2" font-size="7" fill="#b3b3b3" textLength="20.5" lengthAdjust="spacingAndGlyphs" font-family="Liberation Sans" text-anchor="start">Вставить</text>
<text x="105.8" y="151.8" font-size="6.5" fill="#444444" textLength="28.4" lengthAdjust="spacingAndGlyphs" font-family="Liberation Sans" text-anchor="start">Буфер обмена</text>
<text x="149.4" y="135.5" font-size="7.3" fill="#444444" textLength="18.2" lengthAdjust="spacingAndGlyphs" font-family="Liberation Sans" text-anchor="start">Создать</text>
<text x="150.5" y="143.3" font-size="7.3" fill="#444444" textLength="13.0" lengthAdjust="spacingAndGlyphs" font-family="Liberation Sans" text-anchor="start">слайд</text>
<text x="177.8" y="119.8" font-size="7.2" fill="#444444" textLength="13.7" lengthAdjust="spacingAndGlyphs" font-family="Liberation Sans" text-anchor="start">Макет</text>
<text x="177.8" y="130.7" font-size="7.2" fill="#444444" textLength="31.0" lengthAdjust="spacingAndGlyphs" font-family="Liberation Sans" text-anchor="start">Восстановить</text>
<text x="177.8" y="141.7" font-size="7.2" fill="#b3b3b3" textLength="14.5" lengthAdjust="spacingAndGlyphs" font-family="Liberation Sans" text-anchor="start">Раздел</text>
<text x="172.8" y="151.8" font-size="6.5" fill="#444444" textLength="15.2" lengthAdjust="spacingAndGlyphs" font-family="Liberation Sans" text-anchor="start">Слайды</text>
<text x="266.0" y="152.0" font-size="6.5" fill="#444444" textLength="14.3" lengthAdjust="spacingAndGlyphs" font-family="Liberation Sans" text-anchor="start">Шрифт</text>
<text x="405.2" y="152.0" font-size="6.5" fill="#444444" textLength="12.3" lengthAdjust="spacingAndGlyphs" font-family="Liberation Sans" text-anchor="start">Абзац</text>
<text x="421.0" y="120.4" font-size="7" fill="#b3b3b3" textLength="43.5" lengthAdjust="spacingAndGlyphs" font-family="Liberation Sans" text-anchor="start">Направление текста</text>
<text x="421.0" y="131.0" font-size="7" fill="#b3b3b3" textLength="35.0" lengthAdjust="spacingAndGlyphs" font-family="Liberation Sans" text-anchor="start">Выровнять текст</text>
<text x="421.0" y="141.4" font-size="7" fill="#b3b3b3" textLength="57.0" lengthAdjust="spacingAndGlyphs" font-family="Liberation Sans" text-anchor="start">Преобразовать в SmartArt</text>
<text x="552.6" y="135.7" font-size="7.3" fill="#444444" textLength="30.3" lengthAdjust="spacingAndGlyphs" font-family="Liberation Sans" text-anchor="start">Упорядочить</text>
<text x="585.0" y="135.4" font-size="7" fill="#b3b3b3" textLength="22.0" lengthAdjust="spacingAndGlyphs" font-family="Liberation Sans" text-anchor="start">Экспресс-</text>
<text x="590.5" y="143.6" font-size="7" fill="#b3b3b3" textLength="12.0" lengthAdjust="spacingAndGlyphs" font-family="Liberation Sans" text-anchor="start">стили</text>
<text x="617.5" y="120.4" font-size="7" fill="#b3b3b3" textLength="39.0" lengthAdjust="spacingAndGlyphs" font-family="Liberation Sans" text-anchor="start">Заливка фигуры</text>
<text x="617.5" y="131.0" font-size="7" fill="#b3b3b3" textLength="35.0" lengthAdjust="spacingAndGlyphs" font-family="Liberation Sans" text-anchor="start">Контур фигуры</text>
<text x="617.5" y="141.4" font-size="7" fill="#b3b3b3" textLength="40.0" lengthAdjust="spacingAndGlyphs" font-family="Liberation Sans" text-anchor="start">Эффекты фигуры</text>
<text x="566.0" y="152.0" font-size="6.5" fill="#444444" textLength="20.0" lengthAdjust="spacingAndGlyphs" font-family="Liberation Sans" text-anchor="start">Рисование</text>
<text x="679.0" y="119.9" font-size="7.2" fill="#444444" textLength="15.5" lengthAdjust="spacingAndGlyphs" font-family="Liberation Sans" text-anchor="start">Найти</text>
<text x="679.0" y="130.8" font-size="7.2" fill="#444444" textLength="21.0" lengthAdjust="spacingAndGlyphs" font-family="Liberation Sans" text-anchor="start">Заменить</text>
<text x="679.0" y="141.2" font-size="7.2" fill="#444444" textLength="21.0" lengthAdjust="spacingAndGlyphs" font-family="Liberation Sans" text-anchor="start">Выделить</text>
<text x="674.0" y="152.0" font-size="6.5" fill="#444444" textLength="32.2" lengthAdjust="spacingAndGlyphs" font-family="Liberation Sans" text-anchor="start">Редактирование</text>
<text x="103.5" y="163.6" font-size="7.5" fill="#7a7a7a" textLength="7.5" lengthAdjust="spacingAndGlyphs" font-family="Liberation Sans" text-anchor="start">37</text>
<text x="103.5" y="246.6" font-size="7.5" fill="#d0583a" textLength="7.5" lengthAdjust="spacingAndGlyphs" font-family="Liberation Sans" text-anchor="start">38</text>
<text x="103.5" y="329.8" font-size="7.5" fill="#7a7a7a" textLength="7.5" lengthAdjust="spacingAndGlyphs" font-family="Liberation Sans" text-anchor="start">39</text>
<text x="103.5" y="412.9" font-size="7.5" fill="#7a7a7a" textLength="7.5" lengthAdjust="spacingAndGlyphs" font-family="Liberation Sans" text-anchor="start">40</text>
<text x="253.4" y="445.2" font-size="8" fill="#6a6a6a" textLength="99.0" lengthAdjust="spacingAndGlyphs" font-family="Liberation Sans" text-anchor="start">Щелкните, чтобы добавить заметки</text>
<text x="105.0" y="458.5" font-size="6.3" fill="#555555" textLength="28.6" lengthAdjust="spacingAndGlyphs" font-family="Liberation Sans" text-anchor="start">Слайд 38 из 40</text>
<text x="153.8" y="458.5" font-size="6.3" fill="#555555" textLength="40.2" lengthAdjust="spacingAndGlyphs" font-family="Liberation Sans" text-anchor="start">русский (Казахстан)</text>
<text x="207.8" y="458.5" font-size="6.3" fill="#555555" textLength="95.8" lengthAdjust="spacingAndGlyphs" font-family="Liberation Sans" text-anchor="start">Специальные возможности: не поддерживаются</text>
<text x="523.0" y="458.7" font-size="6.3" fill="#555555" textLength="16.3" lengthAdjust="spacingAndGlyphs" font-family="Liberation Sans" text-anchor="start">Заметки</text>
<text x="554.9" y="458.7" font-size="6.3" fill="#555555" textLength="24.4" lengthAdjust="spacingAndGlyphs" font-family="Liberation Sans" text-anchor="start">Примечания</text>
<text x="711.6" y="458.7" font-size="6.3" fill="#555555" textLength="8.7" lengthAdjust="spacingAndGlyphs" font-family="Liberation Sans" text-anchor="start">82%</text>
<text x="197.5" y="325.7" font-size="6.5" fill="#444" textLength="36.0" lengthAdjust="spacingAndGlyphs" font-family="Liberation Sans" text-anchor="start">[Без заголовка]</text>
<text x="7.6" y="492.3" font-size="8.7" fill="#d9d9d9" textLength="50.4" lengthAdjust="spacingAndGlyphs" stroke="#d9d9d9" stroke-width="0.2" font-family="Liberation Sans" text-anchor="start">Включить звук</text>
<text x="67.0" y="492.3" font-size="8.7" fill="#d9d9d9" textLength="63.0" lengthAdjust="spacingAndGlyphs" stroke="#d9d9d9" stroke-width="0.2" font-family="Liberation Sans" text-anchor="start">Остановить видео</text>
<text x="202.6" y="491.3" font-size="8.7" fill="#d9d9d9" textLength="46.4" lengthAdjust="spacingAndGlyphs" stroke="#d9d9d9" stroke-width="0.2" font-family="Liberation Sans" text-anchor="start">Безопасность</text>
<text x="275.0" y="491.3" font-size="8.7" fill="#d9d9d9" textLength="36.0" lengthAdjust="spacingAndGlyphs" stroke="#d9d9d9" stroke-width="0.2" font-family="Liberation Sans" text-anchor="start">Участники</text>
<text x="351.0" y="491.3" font-size="8.7" fill="#d9d9d9" textLength="12.0" lengthAdjust="spacingAndGlyphs" stroke="#d9d9d9" stroke-width="0.2" font-family="Liberation Sans" text-anchor="start">Чат</text>
<text x="386.4" y="491.3" font-size="8.7" fill="#2bd35f" textLength="75.4" lengthAdjust="spacingAndGlyphs" stroke="#2bd35f" stroke-width="0.2" font-family="Liberation Sans" text-anchor="start">Демонстрация экрана</text>
<text x="477.7" y="491.3" font-size="8.7" fill="#d9d9d9" textLength="24.0" lengthAdjust="spacingAndGlyphs" stroke="#d9d9d9" stroke-width="0.2" font-family="Liberation Sans" text-anchor="start">Запись</text>
<text x="519.6" y="491.3" font-size="8.7" fill="#d9d9d9" textLength="60.0" lengthAdjust="spacingAndGlyphs" stroke="#d9d9d9" stroke-width="0.2" font-family="Liberation Sans" text-anchor="start">Сессионные залы</text>
<text x="595.6" y="491.3" font-size="8.7" fill="#d9d9d9" textLength="28.4" lengthAdjust="spacingAndGlyphs" stroke="#d9d9d9" stroke-width="0.2" font-family="Liberation Sans" text-anchor="start">Реакции</text>
<text x="639.0" y="491.3" font-size="8.7" fill="#d9d9d9" textLength="44.5" lengthAdjust="spacingAndGlyphs" stroke="#d9d9d9" stroke-width="0.2" font-family="Liberation Sans" text-anchor="start">Приложения</text>
<text x="303.0" y="473.9" font-size="8.5" fill="#d9d9d9" textLength="9.5" lengthAdjust="spacingAndGlyphs" stroke="#d9d9d9" stroke-width="0.2" font-family="Liberation Sans" text-anchor="start">29</text>
<text x="775.0" y="482.9" font-size="9" fill="#ffffff" font-weight="bold" textLength="44.0" lengthAdjust="spacingAndGlyphs" stroke="#ffffff" stroke-width="0.25" font-family="Liberation Sans" text-anchor="start">Завершение</text>
<text x="598.4" y="514.8" font-size="9" fill="#111111" textLength="17.2" lengthAdjust="spacingAndGlyphs" font-family="Liberation Sans" text-anchor="start">10°C</text>
<text x="621.0" y="514.8" font-size="9" fill="#111111" textLength="39.0" lengthAdjust="spacingAndGlyphs" font-family="Liberation Sans" text-anchor="start">Солнечно</text>
<text x="743.5" y="514.8" font-size="9" fill="#111111" textLength="13.2" lengthAdjust="spacingAndGlyphs" font-family="Liberation Sans" text-anchor="start">КАЗ</text>
<text x="772.7" y="508.2" font-size="8.5" fill="#111111" textLength="16.8" lengthAdjust="spacingAndGlyphs" font-family="Liberation Sans" text-anchor="start">11:54</text>
<text x="764.7" y="520.2" font-size="8.5" fill="#111111" textLength="32.7" lengthAdjust="spacingAndGlyphs" font-family="Liberation Sans" text-anchor="start">25.10.2021</text>
</svg>
</body></html>
